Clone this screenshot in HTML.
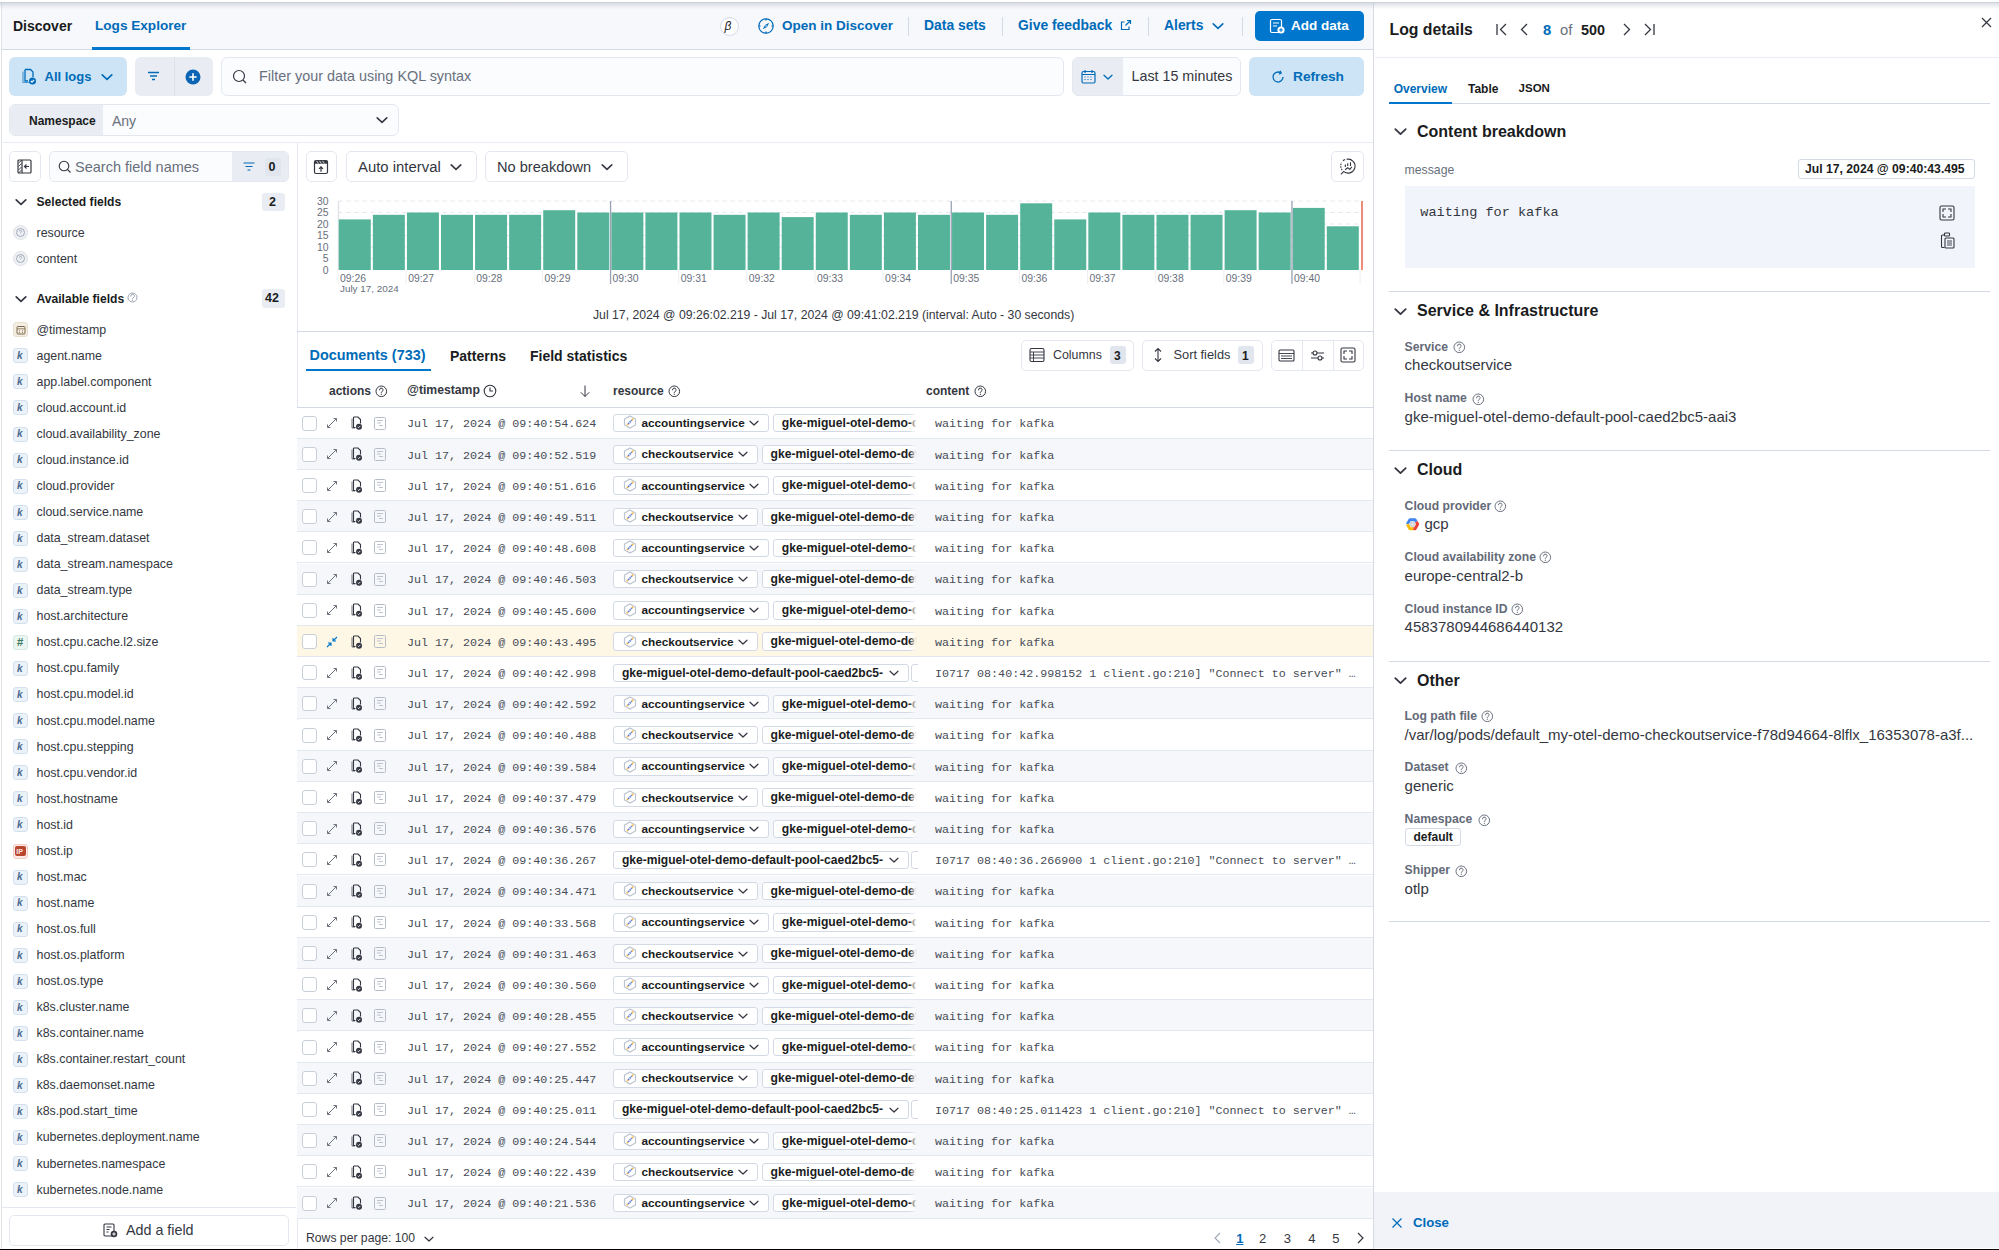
<!DOCTYPE html>
<html><head><meta charset="utf-8">
<style>
*{box-sizing:border-box;margin:0;padding:0}
html,body{width:1999px;height:1250px;overflow:hidden;background:#fff}
body{font-family:"Liberation Sans",sans-serif;color:#343741;position:relative;font-size:14px}
.a{position:absolute}
.t{white-space:nowrap}
svg{display:block;overflow:visible}
</style></head><body>
<div class="a" style="left:1px;top:3px;width:1px;height:1246px;background:#dfe2e7;border-radius:0px;"></div>
<div class="a" style="left:2px;top:3px;width:1371px;height:47px;background:#f7f8fc;border-radius:0px;border-bottom:1px solid #d3dae6"></div>
<div class="a t" style="left:13px;top:18.50px;font-size:14px;height:14px;line-height:14px;color:#1a1c21;font-weight:bold;font-family:'Liberation Sans',sans-serif;">Discover</div>
<div class="a t" style="left:95px;top:18.70px;font-size:13.6px;height:13.6px;line-height:13.6px;color:#006bb8;font-weight:bold;font-family:'Liberation Sans',sans-serif;">Logs Explorer</div>
<div class="a" style="left:92px;top:47px;width:98px;height:3px;background:#0077cc;border-radius:0px;"></div>
<div class="a" style="left:719.5px;top:16.5px;width:19px;height:19px;border-radius:50%;background:#fff;border:1px solid #d3dae6"></div>
<div class="a t" style="left:724.5px;top:20.00px;font-size:12px;height:12px;line-height:12px;color:#1a1c21;font-weight:normal;font-family:'Liberation Sans',sans-serif;font-style:italic">&beta;</div>
<svg class="a" style="left:758px;top:18px;" width="16" height="16" viewBox="0 0 16 16" fill="none"><circle cx="8" cy="8" r="7.2" stroke="#006bb8" stroke-width="1.2"/><path d="M8 0.8v1.8M8 13.4v1.8M0.8 8h1.8M13.4 8h1.8" stroke="#006bb8" stroke-width="1.2"/><path d="M11.2 4.8 L9 9 L4.8 11.2 L7 7 Z" fill="#006bb8"/><circle cx="8" cy="8" r="0.8" fill="#fff"/></svg>
<div class="a t" style="left:782px;top:19.25px;font-size:13.5px;height:13.5px;line-height:13.5px;color:#006bb8;font-weight:bold;font-family:'Liberation Sans',sans-serif;">Open in Discover</div>
<div class="a" style="left:908px;top:17px;width:1px;height:19px;background:#d3dae6;border-radius:0px;"></div>
<div class="a t" style="left:924px;top:19.05px;font-size:13.9px;height:13.9px;line-height:13.9px;color:#006bb8;font-weight:bold;font-family:'Liberation Sans',sans-serif;">Data sets</div>
<div class="a" style="left:1002px;top:17px;width:1px;height:19px;background:#d3dae6;border-radius:0px;"></div>
<div class="a t" style="left:1018px;top:19.05px;font-size:13.9px;height:13.9px;line-height:13.9px;color:#006bb8;font-weight:bold;font-family:'Liberation Sans',sans-serif;">Give feedback</div>
<svg class="a" style="left:1120px;top:19px;" width="12" height="12" viewBox="0 0 12 12" fill="none"><path d="M7 1.5 H10.5 V5 M10.5 1.5 L5.5 6.5 M9 7.5 V10.5 H1.5 V3 H4.5" stroke="#006bb8" stroke-width="1.2"/></svg>
<div class="a" style="left:1148px;top:17px;width:1px;height:19px;background:#d3dae6;border-radius:0px;"></div>
<div class="a t" style="left:1164px;top:19.05px;font-size:13.9px;height:13.9px;line-height:13.9px;color:#006bb8;font-weight:bold;font-family:'Liberation Sans',sans-serif;">Alerts</div>
<svg class="a" style="left:1212.0px;top:20.0px;" width="12" height="12" viewBox="0 0 10 10" fill="none"><path d="M1 3.2 L5 7 L9 3.2" stroke="#006bb8" stroke-width="1.3" stroke-linecap="round" stroke-linejoin="round"/></svg>
<div class="a" style="left:1242px;top:17px;width:1px;height:19px;background:#d3dae6;border-radius:0px;"></div>
<div class="a" style="left:1255px;top:11px;width:109px;height:30px;background:#0077cc;border-radius:5px;"></div>
<svg class="a" style="left:1269px;top:18px;" width="16" height="16" viewBox="0 0 16 16" fill="none"><rect x="1.5" y="1.5" width="11" height="13" rx="1.5" stroke="#fff" stroke-width="1.2"/><path d="M4 5h6M4 8h4" stroke="#fff" stroke-width="1.2"/><circle cx="12" cy="12" r="3.6" fill="#fff"/><path d="M12 10.2v3.6M10.2 12h3.6" stroke="#0077cc" stroke-width="1.2"/></svg>
<div class="a t" style="left:1291px;top:19.25px;font-size:13.5px;height:13.5px;line-height:13.5px;color:#fff;font-weight:bold;font-family:'Liberation Sans',sans-serif;">Add data</div>
<div class="a" style="left:9px;top:57px;width:118px;height:39px;background:#cce4f5;border-radius:6px;"></div>
<svg class="a" style="left:20px;top:68px;" width="17" height="17" viewBox="0 0 17 17" fill="none"><path d="M3 3.5 V14.5 H10" stroke="#006bb8" stroke-width="1.2" opacity="0.6"/><path d="M5 1.5 H10.5 L13 4 V9 M5 1.5 V13 H8" stroke="#006bb8" stroke-width="1.3"/><circle cx="12.5" cy="13" r="3.5" fill="#006bb8"/><path d="M10.8 13 L12 14.2 L14.2 11.8" stroke="#fff" stroke-width="1.1"/></svg>
<div class="a t" style="left:44.5px;top:70.00px;font-size:13px;height:13px;line-height:13px;color:#006bb8;font-weight:bold;font-family:'Liberation Sans',sans-serif;">All logs</div>
<svg class="a" style="left:101.0px;top:70.5px;" width="12" height="12" viewBox="0 0 10 10" fill="none"><path d="M1 3.2 L5 7 L9 3.2" stroke="#006bb8" stroke-width="1.4" stroke-linecap="round" stroke-linejoin="round"/></svg>
<div class="a" style="left:135px;top:57px;width:78px;height:39px;background:#e9edf3;border-radius:6px;"></div>
<div class="a" style="left:174px;top:57px;width:1px;height:39px;background:#dde2ea;border-radius:0px;"></div>
<svg class="a" style="left:147px;top:71px;" width="13" height="11" viewBox="0 0 13 11" fill="none"><path d="M1 1.5h11M3 5h7M5 8.5h3" stroke="#006bb8" stroke-width="1.3"/></svg>
<svg class="a" style="left:185px;top:69px;" width="16" height="16" viewBox="0 0 16 16" fill="none"><circle cx="8" cy="8" r="7.5" fill="#0b64b4"/><path d="M8 4.3v7.4M4.3 8h7.4" stroke="#fff" stroke-width="1.6"/></svg>
<div class="a" style="left:221px;top:57px;width:843px;height:39px;background:#fbfcfd;border:1px solid #e3e8f0;border-radius:6px;"></div>
<svg class="a" style="left:232px;top:69px;" width="16" height="16" viewBox="0 0 16 16" fill="none"><circle cx="7" cy="7" r="5.5" stroke="#343741" stroke-width="1.2"/><path d="M11 11 L14 14" stroke="#343741" stroke-width="1.2"/></svg>
<div class="a t" style="left:259px;top:69.30px;font-size:14.4px;height:14.4px;line-height:14.4px;color:#69707d;font-weight:normal;font-family:'Liberation Sans',sans-serif;">Filter your data using KQL syntax</div>
<div class="a" style="left:1072px;top:57px;width:169px;height:39px;background:#fbfcfd;border:1px solid #e3e8f0;border-radius:6px;"></div>
<div class="a" style="left:1073px;top:58px;width:50px;height:37px;background:#e9edf3;border-radius:0px;border-radius:5px 0 0 5px"></div>
<svg class="a" style="left:1081px;top:69px;" width="15" height="15" viewBox="0 0 15 15" fill="none"><rect x="1" y="2.5" width="13" height="11.5" rx="1.5" stroke="#006bb8" stroke-width="1.2"/><path d="M1 5.5h13M4 1v3M11 1v3" stroke="#006bb8" stroke-width="1.2"/><path d="M3.5 8h1M6.5 8h1M9.5 8h1M3.5 10.5h1M6.5 10.5h1M9.5 10.5h1" stroke="#006bb8" stroke-width="1"/></svg>
<svg class="a" style="left:1103.0px;top:72.0px;" width="10" height="10" viewBox="0 0 10 10" fill="none"><path d="M1 3.2 L5 7 L9 3.2" stroke="#006bb8" stroke-width="1.3" stroke-linecap="round" stroke-linejoin="round"/></svg>
<div class="a t" style="left:1131.5px;top:69.35px;font-size:14.3px;height:14.3px;line-height:14.3px;color:#343741;font-weight:normal;font-family:'Liberation Sans',sans-serif;">Last 15 minutes</div>
<div class="a" style="left:1249px;top:57px;width:115px;height:39px;background:#cce4f5;border-radius:6px;"></div>
<svg class="a" style="left:1271px;top:70px;" width="14" height="14" viewBox="0 0 14 14" fill="none"><path d="M12 7 A5 5 0 1 1 9.5 2.7" stroke="#006bb8" stroke-width="1.3"/><path d="M9 0.8 L10.2 3 L8 4.2" stroke="#006bb8" stroke-width="1.3"/></svg>
<div class="a t" style="left:1293px;top:69.65px;font-size:13.7px;height:13.7px;line-height:13.7px;color:#006bb8;font-weight:bold;font-family:'Liberation Sans',sans-serif;">Refresh</div>
<div class="a" style="left:9px;top:104px;width:390px;height:32px;background:#fbfcfd;border:1px solid #e3e8f0;border-radius:6px;"></div>
<div class="a" style="left:10px;top:105px;width:93px;height:30px;background:#e9edf3;border-radius:0px;border-radius:5px 0 0 5px"></div>
<div class="a t" style="left:29px;top:114.50px;font-size:12px;height:12px;line-height:12px;color:#1a1c21;font-weight:bold;font-family:'Liberation Sans',sans-serif;">Namespace</div>
<div class="a t" style="left:112px;top:113.50px;font-size:14px;height:14px;line-height:14px;color:#69707d;font-weight:normal;font-family:'Liberation Sans',sans-serif;">Any</div>
<svg class="a" style="left:376.0px;top:114.0px;" width="12" height="12" viewBox="0 0 10 10" fill="none"><path d="M1 3.2 L5 7 L9 3.2" stroke="#343741" stroke-width="1.3" stroke-linecap="round" stroke-linejoin="round"/></svg>
<div class="a" style="left:1px;top:142px;width:1372px;height:1px;background:#e9edf3;border-radius:0px;"></div>
<div class="a" style="left:296.5px;top:143px;width:1.3px;height:1106px;background:#e3e8f0;border-radius:0px;"></div>
<div class="a" style="left:9px;top:151px;width:32px;height:31px;background:#fff;border:1px solid #e3e8f0;border-radius:5px;"></div>
<svg class="a" style="left:17px;top:159px;" width="16" height="15" viewBox="0 0 16 15" fill="none"><rect x="1" y="1" width="13" height="13" rx="1" stroke="#343741" stroke-width="1.2"/><path d="M5 1v13" stroke="#343741" stroke-width="1.2"/><path d="M1.5 4l3-2.5M1.5 7.5l3-3M1.5 11l3-3M1.5 14l3-3" stroke="#343741" stroke-width="0.9"/><path d="M12 7.5H7.5M9.5 5.5l-2 2 2 2" stroke="#343741" stroke-width="1.2"/></svg>
<div class="a" style="left:49px;top:151px;width:240px;height:31px;background:#fbfcfd;border:1px solid #e3e8f0;border-radius:5px;"></div>
<div class="a" style="left:232px;top:152px;width:56px;height:29px;background:#e9edf3;border-radius:0px;border-radius:0 4px 4px 0"></div>
<svg class="a" style="left:58px;top:160px;" width="14" height="14" viewBox="0 0 14 14" fill="none"><circle cx="6" cy="6" r="4.8" stroke="#343741" stroke-width="1.1"/><path d="M9.5 9.5L12.5 12.5" stroke="#343741" stroke-width="1.1"/></svg>
<div class="a t" style="left:75px;top:159.75px;font-size:14.5px;height:14.5px;line-height:14.5px;color:#69707d;font-weight:normal;font-family:'Liberation Sans',sans-serif;">Search field names</div>
<svg class="a" style="left:243px;top:162px;" width="12" height="10" viewBox="0 0 12 10" fill="none"><path d="M0.5 1h11M2.5 4.5h7M4.5 8h3" stroke="#006bb8" stroke-width="1.2"/></svg>
<div class="a" style="left:264.5px;top:158px;width:16px;height:18px;background:#e0e5ee;border-radius:3px;"></div>
<div class="a t" style="left:268.5px;top:160.75px;font-size:12.5px;height:12.5px;line-height:12.5px;color:#1a1c21;font-weight:bold;font-family:'Liberation Sans',sans-serif;">0</div>
<svg class="a" style="left:14.5px;top:195.5px;" width="12" height="12" viewBox="0 0 10 10" fill="none"><path d="M1 3.2 L5 7 L9 3.2" stroke="#343741" stroke-width="1.4" stroke-linecap="round" stroke-linejoin="round"/></svg>
<div class="a t" style="left:36.5px;top:196.25px;font-size:12.1px;height:12.1px;line-height:12.1px;color:#1a1c21;font-weight:bold;font-family:'Liberation Sans',sans-serif;">Selected fields</div>
<div class="a" style="left:262px;top:193px;width:23px;height:18px;background:#e9edf3;border-radius:3px;"></div>
<div class="a t" style="left:269px;top:195.75px;font-size:12.5px;height:12.5px;line-height:12.5px;color:#1a1c21;font-weight:bold;font-family:'Liberation Sans',sans-serif;">2</div>
<svg class="a" style="left:13.3px;top:225.3px;" width="15" height="15" viewBox="0 0 15 15" fill="none"><circle cx="7.5" cy="7.5" r="7" fill="#eef0f3" stroke="#dfe2e7" stroke-width="1"/><circle cx="7.5" cy="7.5" r="4" stroke="#98a2b3" stroke-width="0.9"/><path d="M6.3 6.5a1.2 1.2 0 1 1 1.8 1c-.4.2-.6.4-.6.9" stroke="#98a2b3" stroke-width="0.8"/></svg>
<div class="a t" style="left:36.5px;top:227.30px;font-size:12.4px;height:12.4px;line-height:12.4px;color:#343741;font-weight:normal;font-family:'Liberation Sans',sans-serif;">resource</div>
<svg class="a" style="left:13.3px;top:251.2px;" width="15" height="15" viewBox="0 0 15 15" fill="none"><circle cx="7.5" cy="7.5" r="7" fill="#eef0f3" stroke="#dfe2e7" stroke-width="1"/><circle cx="7.5" cy="7.5" r="4" stroke="#98a2b3" stroke-width="0.9"/><path d="M6.3 6.5a1.2 1.2 0 1 1 1.8 1c-.4.2-.6.4-.6.9" stroke="#98a2b3" stroke-width="0.8"/></svg>
<div class="a t" style="left:36.5px;top:253.30px;font-size:12.4px;height:12.4px;line-height:12.4px;color:#343741;font-weight:normal;font-family:'Liberation Sans',sans-serif;">content</div>
<svg class="a" style="left:14.5px;top:292.5px;" width="12" height="12" viewBox="0 0 10 10" fill="none"><path d="M1 3.2 L5 7 L9 3.2" stroke="#343741" stroke-width="1.4" stroke-linecap="round" stroke-linejoin="round"/></svg>
<div class="a t" style="left:36.5px;top:293.25px;font-size:12.1px;height:12.1px;line-height:12.1px;color:#1a1c21;font-weight:bold;font-family:'Liberation Sans',sans-serif;">Available fields</div>
<svg class="a" style="left:127.0px;top:292.0px;" width="11.0" height="11.0" viewBox="0 0 11.0 11.0" fill="none"><circle cx="5.5" cy="5.5" r="4.5" stroke="#98a2b3" stroke-width="1"/><path d="M3.7 4.1 a1.8 1.8 0 1 1 2.6 1.6 c-0.6 0.3 -0.8 0.6 -0.8 1.3" stroke="#98a2b3" stroke-width="1" stroke-linecap="round"/><circle cx="5.5" cy="8.5" r="0.6" fill="#98a2b3"/></svg>
<div class="a" style="left:262px;top:289px;width:23px;height:19px;background:#e9edf3;border-radius:3px;"></div>
<div class="a t" style="left:265px;top:292.25px;font-size:12.5px;height:12.5px;line-height:12.5px;color:#1a1c21;font-weight:bold;font-family:'Liberation Sans',sans-serif;">42</div>
<div class="a" style="left:13px;top:322.3px;width:15px;height:15px;background:#f4ede1;border:1px solid #e8dfcd;border-radius:3px;"></div>
<svg class="a" style="left:15.5px;top:324.8px;" width="10" height="10" viewBox="0 0 10 10" fill="none"><rect x="1" y="1.5" width="8" height="7.5" rx="1" stroke="#7d6a4d" stroke-width="1"/><path d="M1 3.8h8M3 5.8h1M6 5.8h1M3 7.5h1M6 7.5h1" stroke="#7d6a4d" stroke-width="0.8"/></svg>
<div class="a t" style="left:36.5px;top:323.60px;font-size:12.4px;height:12.4px;line-height:12.4px;color:#343741;font-weight:normal;font-family:'Liberation Sans',sans-serif;">@timestamp</div>
<div class="a" style="left:13px;top:348.36px;width:15px;height:15px;background:#ebf2fa;border:1px solid #d3e1ef;border-radius:3px;"></div>
<div class="a t" style="left:17px;top:351.16px;font-size:10px;height:10px;line-height:10px;color:#4a6a8e;font-weight:bold;font-family:'Liberation Sans',sans-serif;font-style:italic">k</div>
<div class="a t" style="left:36.5px;top:349.66px;font-size:12.4px;height:12.4px;line-height:12.4px;color:#343741;font-weight:normal;font-family:'Liberation Sans',sans-serif;">agent.name</div>
<div class="a" style="left:13px;top:374.42px;width:15px;height:15px;background:#ebf2fa;border:1px solid #d3e1ef;border-radius:3px;"></div>
<div class="a t" style="left:17px;top:377.22px;font-size:10px;height:10px;line-height:10px;color:#4a6a8e;font-weight:bold;font-family:'Liberation Sans',sans-serif;font-style:italic">k</div>
<div class="a t" style="left:36.5px;top:375.72px;font-size:12.4px;height:12.4px;line-height:12.4px;color:#343741;font-weight:normal;font-family:'Liberation Sans',sans-serif;">app.label.component</div>
<div class="a" style="left:13px;top:400.48px;width:15px;height:15px;background:#ebf2fa;border:1px solid #d3e1ef;border-radius:3px;"></div>
<div class="a t" style="left:17px;top:403.28px;font-size:10px;height:10px;line-height:10px;color:#4a6a8e;font-weight:bold;font-family:'Liberation Sans',sans-serif;font-style:italic">k</div>
<div class="a t" style="left:36.5px;top:401.78px;font-size:12.4px;height:12.4px;line-height:12.4px;color:#343741;font-weight:normal;font-family:'Liberation Sans',sans-serif;">cloud.account.id</div>
<div class="a" style="left:13px;top:426.54px;width:15px;height:15px;background:#ebf2fa;border:1px solid #d3e1ef;border-radius:3px;"></div>
<div class="a t" style="left:17px;top:429.34px;font-size:10px;height:10px;line-height:10px;color:#4a6a8e;font-weight:bold;font-family:'Liberation Sans',sans-serif;font-style:italic">k</div>
<div class="a t" style="left:36.5px;top:427.84px;font-size:12.4px;height:12.4px;line-height:12.4px;color:#343741;font-weight:normal;font-family:'Liberation Sans',sans-serif;">cloud.availability_zone</div>
<div class="a" style="left:13px;top:452.6px;width:15px;height:15px;background:#ebf2fa;border:1px solid #d3e1ef;border-radius:3px;"></div>
<div class="a t" style="left:17px;top:455.40px;font-size:10px;height:10px;line-height:10px;color:#4a6a8e;font-weight:bold;font-family:'Liberation Sans',sans-serif;font-style:italic">k</div>
<div class="a t" style="left:36.5px;top:453.90px;font-size:12.4px;height:12.4px;line-height:12.4px;color:#343741;font-weight:normal;font-family:'Liberation Sans',sans-serif;">cloud.instance.id</div>
<div class="a" style="left:13px;top:478.65999999999997px;width:15px;height:15px;background:#ebf2fa;border:1px solid #d3e1ef;border-radius:3px;"></div>
<div class="a t" style="left:17px;top:481.46px;font-size:10px;height:10px;line-height:10px;color:#4a6a8e;font-weight:bold;font-family:'Liberation Sans',sans-serif;font-style:italic">k</div>
<div class="a t" style="left:36.5px;top:479.96px;font-size:12.4px;height:12.4px;line-height:12.4px;color:#343741;font-weight:normal;font-family:'Liberation Sans',sans-serif;">cloud.provider</div>
<div class="a" style="left:13px;top:504.72px;width:15px;height:15px;background:#ebf2fa;border:1px solid #d3e1ef;border-radius:3px;"></div>
<div class="a t" style="left:17px;top:507.52px;font-size:10px;height:10px;line-height:10px;color:#4a6a8e;font-weight:bold;font-family:'Liberation Sans',sans-serif;font-style:italic">k</div>
<div class="a t" style="left:36.5px;top:506.02px;font-size:12.4px;height:12.4px;line-height:12.4px;color:#343741;font-weight:normal;font-family:'Liberation Sans',sans-serif;">cloud.service.name</div>
<div class="a" style="left:13px;top:530.78px;width:15px;height:15px;background:#ebf2fa;border:1px solid #d3e1ef;border-radius:3px;"></div>
<div class="a t" style="left:17px;top:533.58px;font-size:10px;height:10px;line-height:10px;color:#4a6a8e;font-weight:bold;font-family:'Liberation Sans',sans-serif;font-style:italic">k</div>
<div class="a t" style="left:36.5px;top:532.08px;font-size:12.4px;height:12.4px;line-height:12.4px;color:#343741;font-weight:normal;font-family:'Liberation Sans',sans-serif;">data_stream.dataset</div>
<div class="a" style="left:13px;top:556.84px;width:15px;height:15px;background:#ebf2fa;border:1px solid #d3e1ef;border-radius:3px;"></div>
<div class="a t" style="left:17px;top:559.64px;font-size:10px;height:10px;line-height:10px;color:#4a6a8e;font-weight:bold;font-family:'Liberation Sans',sans-serif;font-style:italic">k</div>
<div class="a t" style="left:36.5px;top:558.14px;font-size:12.4px;height:12.4px;line-height:12.4px;color:#343741;font-weight:normal;font-family:'Liberation Sans',sans-serif;">data_stream.namespace</div>
<div class="a" style="left:13px;top:582.9px;width:15px;height:15px;background:#ebf2fa;border:1px solid #d3e1ef;border-radius:3px;"></div>
<div class="a t" style="left:17px;top:585.70px;font-size:10px;height:10px;line-height:10px;color:#4a6a8e;font-weight:bold;font-family:'Liberation Sans',sans-serif;font-style:italic">k</div>
<div class="a t" style="left:36.5px;top:584.20px;font-size:12.4px;height:12.4px;line-height:12.4px;color:#343741;font-weight:normal;font-family:'Liberation Sans',sans-serif;">data_stream.type</div>
<div class="a" style="left:13px;top:608.96px;width:15px;height:15px;background:#ebf2fa;border:1px solid #d3e1ef;border-radius:3px;"></div>
<div class="a t" style="left:17px;top:611.76px;font-size:10px;height:10px;line-height:10px;color:#4a6a8e;font-weight:bold;font-family:'Liberation Sans',sans-serif;font-style:italic">k</div>
<div class="a t" style="left:36.5px;top:610.26px;font-size:12.4px;height:12.4px;line-height:12.4px;color:#343741;font-weight:normal;font-family:'Liberation Sans',sans-serif;">host.architecture</div>
<div class="a" style="left:13px;top:635.02px;width:15px;height:15px;background:#ebf6f3;border:1px solid #d3e9e2;border-radius:3px;"></div>
<div class="a t" style="left:16.8px;top:637.37px;font-size:11.5px;height:11.5px;line-height:11.5px;color:#3d7a62;font-weight:bold;font-family:'Liberation Sans',sans-serif;font-style:italic">#</div>
<div class="a t" style="left:36.5px;top:636.32px;font-size:12.4px;height:12.4px;line-height:12.4px;color:#343741;font-weight:normal;font-family:'Liberation Sans',sans-serif;">host.cpu.cache.l2.size</div>
<div class="a" style="left:13px;top:661.0799999999999px;width:15px;height:15px;background:#ebf2fa;border:1px solid #d3e1ef;border-radius:3px;"></div>
<div class="a t" style="left:17px;top:663.88px;font-size:10px;height:10px;line-height:10px;color:#4a6a8e;font-weight:bold;font-family:'Liberation Sans',sans-serif;font-style:italic">k</div>
<div class="a t" style="left:36.5px;top:662.38px;font-size:12.4px;height:12.4px;line-height:12.4px;color:#343741;font-weight:normal;font-family:'Liberation Sans',sans-serif;">host.cpu.family</div>
<div class="a" style="left:13px;top:687.14px;width:15px;height:15px;background:#ebf2fa;border:1px solid #d3e1ef;border-radius:3px;"></div>
<div class="a t" style="left:17px;top:689.94px;font-size:10px;height:10px;line-height:10px;color:#4a6a8e;font-weight:bold;font-family:'Liberation Sans',sans-serif;font-style:italic">k</div>
<div class="a t" style="left:36.5px;top:688.44px;font-size:12.4px;height:12.4px;line-height:12.4px;color:#343741;font-weight:normal;font-family:'Liberation Sans',sans-serif;">host.cpu.model.id</div>
<div class="a" style="left:13px;top:713.2px;width:15px;height:15px;background:#ebf2fa;border:1px solid #d3e1ef;border-radius:3px;"></div>
<div class="a t" style="left:17px;top:716.00px;font-size:10px;height:10px;line-height:10px;color:#4a6a8e;font-weight:bold;font-family:'Liberation Sans',sans-serif;font-style:italic">k</div>
<div class="a t" style="left:36.5px;top:714.50px;font-size:12.4px;height:12.4px;line-height:12.4px;color:#343741;font-weight:normal;font-family:'Liberation Sans',sans-serif;">host.cpu.model.name</div>
<div class="a" style="left:13px;top:739.26px;width:15px;height:15px;background:#ebf2fa;border:1px solid #d3e1ef;border-radius:3px;"></div>
<div class="a t" style="left:17px;top:742.06px;font-size:10px;height:10px;line-height:10px;color:#4a6a8e;font-weight:bold;font-family:'Liberation Sans',sans-serif;font-style:italic">k</div>
<div class="a t" style="left:36.5px;top:740.56px;font-size:12.4px;height:12.4px;line-height:12.4px;color:#343741;font-weight:normal;font-family:'Liberation Sans',sans-serif;">host.cpu.stepping</div>
<div class="a" style="left:13px;top:765.3199999999999px;width:15px;height:15px;background:#ebf2fa;border:1px solid #d3e1ef;border-radius:3px;"></div>
<div class="a t" style="left:17px;top:768.12px;font-size:10px;height:10px;line-height:10px;color:#4a6a8e;font-weight:bold;font-family:'Liberation Sans',sans-serif;font-style:italic">k</div>
<div class="a t" style="left:36.5px;top:766.62px;font-size:12.4px;height:12.4px;line-height:12.4px;color:#343741;font-weight:normal;font-family:'Liberation Sans',sans-serif;">host.cpu.vendor.id</div>
<div class="a" style="left:13px;top:791.38px;width:15px;height:15px;background:#ebf2fa;border:1px solid #d3e1ef;border-radius:3px;"></div>
<div class="a t" style="left:17px;top:794.18px;font-size:10px;height:10px;line-height:10px;color:#4a6a8e;font-weight:bold;font-family:'Liberation Sans',sans-serif;font-style:italic">k</div>
<div class="a t" style="left:36.5px;top:792.68px;font-size:12.4px;height:12.4px;line-height:12.4px;color:#343741;font-weight:normal;font-family:'Liberation Sans',sans-serif;">host.hostname</div>
<div class="a" style="left:13px;top:817.44px;width:15px;height:15px;background:#ebf2fa;border:1px solid #d3e1ef;border-radius:3px;"></div>
<div class="a t" style="left:17px;top:820.24px;font-size:10px;height:10px;line-height:10px;color:#4a6a8e;font-weight:bold;font-family:'Liberation Sans',sans-serif;font-style:italic">k</div>
<div class="a t" style="left:36.5px;top:818.74px;font-size:12.4px;height:12.4px;line-height:12.4px;color:#343741;font-weight:normal;font-family:'Liberation Sans',sans-serif;">host.id</div>
<div class="a" style="left:13px;top:843.5px;width:15px;height:15px;background:#fbe9e5;border:1px solid #f2cdc4;border-radius:3px;"></div>
<div class="a" style="left:15.2px;top:845.7px;width:10.6px;height:10.6px;background:#b9472f;border-radius:2px;"></div>
<div class="a t" style="left:16.3px;top:847.80px;font-size:7px;height:7px;line-height:7px;color:#fde9e4;font-weight:bold;font-family:'Liberation Sans',sans-serif;">IP</div>
<div class="a t" style="left:36.5px;top:844.80px;font-size:12.4px;height:12.4px;line-height:12.4px;color:#343741;font-weight:normal;font-family:'Liberation Sans',sans-serif;">host.ip</div>
<div class="a" style="left:13px;top:869.56px;width:15px;height:15px;background:#ebf2fa;border:1px solid #d3e1ef;border-radius:3px;"></div>
<div class="a t" style="left:17px;top:872.36px;font-size:10px;height:10px;line-height:10px;color:#4a6a8e;font-weight:bold;font-family:'Liberation Sans',sans-serif;font-style:italic">k</div>
<div class="a t" style="left:36.5px;top:870.86px;font-size:12.4px;height:12.4px;line-height:12.4px;color:#343741;font-weight:normal;font-family:'Liberation Sans',sans-serif;">host.mac</div>
<div class="a" style="left:13px;top:895.6199999999999px;width:15px;height:15px;background:#ebf2fa;border:1px solid #d3e1ef;border-radius:3px;"></div>
<div class="a t" style="left:17px;top:898.42px;font-size:10px;height:10px;line-height:10px;color:#4a6a8e;font-weight:bold;font-family:'Liberation Sans',sans-serif;font-style:italic">k</div>
<div class="a t" style="left:36.5px;top:896.92px;font-size:12.4px;height:12.4px;line-height:12.4px;color:#343741;font-weight:normal;font-family:'Liberation Sans',sans-serif;">host.name</div>
<div class="a" style="left:13px;top:921.6800000000001px;width:15px;height:15px;background:#ebf2fa;border:1px solid #d3e1ef;border-radius:3px;"></div>
<div class="a t" style="left:17px;top:924.48px;font-size:10px;height:10px;line-height:10px;color:#4a6a8e;font-weight:bold;font-family:'Liberation Sans',sans-serif;font-style:italic">k</div>
<div class="a t" style="left:36.5px;top:922.98px;font-size:12.4px;height:12.4px;line-height:12.4px;color:#343741;font-weight:normal;font-family:'Liberation Sans',sans-serif;">host.os.full</div>
<div class="a" style="left:13px;top:947.74px;width:15px;height:15px;background:#ebf2fa;border:1px solid #d3e1ef;border-radius:3px;"></div>
<div class="a t" style="left:17px;top:950.54px;font-size:10px;height:10px;line-height:10px;color:#4a6a8e;font-weight:bold;font-family:'Liberation Sans',sans-serif;font-style:italic">k</div>
<div class="a t" style="left:36.5px;top:949.04px;font-size:12.4px;height:12.4px;line-height:12.4px;color:#343741;font-weight:normal;font-family:'Liberation Sans',sans-serif;">host.os.platform</div>
<div class="a" style="left:13px;top:973.8px;width:15px;height:15px;background:#ebf2fa;border:1px solid #d3e1ef;border-radius:3px;"></div>
<div class="a t" style="left:17px;top:976.60px;font-size:10px;height:10px;line-height:10px;color:#4a6a8e;font-weight:bold;font-family:'Liberation Sans',sans-serif;font-style:italic">k</div>
<div class="a t" style="left:36.5px;top:975.10px;font-size:12.4px;height:12.4px;line-height:12.4px;color:#343741;font-weight:normal;font-family:'Liberation Sans',sans-serif;">host.os.type</div>
<div class="a" style="left:13px;top:999.8599999999999px;width:15px;height:15px;background:#ebf2fa;border:1px solid #d3e1ef;border-radius:3px;"></div>
<div class="a t" style="left:17px;top:1002.66px;font-size:10px;height:10px;line-height:10px;color:#4a6a8e;font-weight:bold;font-family:'Liberation Sans',sans-serif;font-style:italic">k</div>
<div class="a t" style="left:36.5px;top:1001.16px;font-size:12.4px;height:12.4px;line-height:12.4px;color:#343741;font-weight:normal;font-family:'Liberation Sans',sans-serif;">k8s.cluster.name</div>
<div class="a" style="left:13px;top:1025.92px;width:15px;height:15px;background:#ebf2fa;border:1px solid #d3e1ef;border-radius:3px;"></div>
<div class="a t" style="left:17px;top:1028.72px;font-size:10px;height:10px;line-height:10px;color:#4a6a8e;font-weight:bold;font-family:'Liberation Sans',sans-serif;font-style:italic">k</div>
<div class="a t" style="left:36.5px;top:1027.22px;font-size:12.4px;height:12.4px;line-height:12.4px;color:#343741;font-weight:normal;font-family:'Liberation Sans',sans-serif;">k8s.container.name</div>
<div class="a" style="left:13px;top:1051.98px;width:15px;height:15px;background:#ebf2fa;border:1px solid #d3e1ef;border-radius:3px;"></div>
<div class="a t" style="left:17px;top:1054.78px;font-size:10px;height:10px;line-height:10px;color:#4a6a8e;font-weight:bold;font-family:'Liberation Sans',sans-serif;font-style:italic">k</div>
<div class="a t" style="left:36.5px;top:1053.28px;font-size:12.4px;height:12.4px;line-height:12.4px;color:#343741;font-weight:normal;font-family:'Liberation Sans',sans-serif;">k8s.container.restart_count</div>
<div class="a" style="left:13px;top:1078.04px;width:15px;height:15px;background:#ebf2fa;border:1px solid #d3e1ef;border-radius:3px;"></div>
<div class="a t" style="left:17px;top:1080.84px;font-size:10px;height:10px;line-height:10px;color:#4a6a8e;font-weight:bold;font-family:'Liberation Sans',sans-serif;font-style:italic">k</div>
<div class="a t" style="left:36.5px;top:1079.34px;font-size:12.4px;height:12.4px;line-height:12.4px;color:#343741;font-weight:normal;font-family:'Liberation Sans',sans-serif;">k8s.daemonset.name</div>
<div class="a" style="left:13px;top:1104.1px;width:15px;height:15px;background:#ebf2fa;border:1px solid #d3e1ef;border-radius:3px;"></div>
<div class="a t" style="left:17px;top:1106.90px;font-size:10px;height:10px;line-height:10px;color:#4a6a8e;font-weight:bold;font-family:'Liberation Sans',sans-serif;font-style:italic">k</div>
<div class="a t" style="left:36.5px;top:1105.40px;font-size:12.4px;height:12.4px;line-height:12.4px;color:#343741;font-weight:normal;font-family:'Liberation Sans',sans-serif;">k8s.pod.start_time</div>
<div class="a" style="left:13px;top:1130.16px;width:15px;height:15px;background:#ebf2fa;border:1px solid #d3e1ef;border-radius:3px;"></div>
<div class="a t" style="left:17px;top:1132.96px;font-size:10px;height:10px;line-height:10px;color:#4a6a8e;font-weight:bold;font-family:'Liberation Sans',sans-serif;font-style:italic">k</div>
<div class="a t" style="left:36.5px;top:1131.46px;font-size:12.4px;height:12.4px;line-height:12.4px;color:#343741;font-weight:normal;font-family:'Liberation Sans',sans-serif;">kubernetes.deployment.name</div>
<div class="a" style="left:13px;top:1156.22px;width:15px;height:15px;background:#ebf2fa;border:1px solid #d3e1ef;border-radius:3px;"></div>
<div class="a t" style="left:17px;top:1159.02px;font-size:10px;height:10px;line-height:10px;color:#4a6a8e;font-weight:bold;font-family:'Liberation Sans',sans-serif;font-style:italic">k</div>
<div class="a t" style="left:36.5px;top:1157.52px;font-size:12.4px;height:12.4px;line-height:12.4px;color:#343741;font-weight:normal;font-family:'Liberation Sans',sans-serif;">kubernetes.namespace</div>
<div class="a" style="left:13px;top:1182.28px;width:15px;height:15px;background:#ebf2fa;border:1px solid #d3e1ef;border-radius:3px;"></div>
<div class="a t" style="left:17px;top:1185.08px;font-size:10px;height:10px;line-height:10px;color:#4a6a8e;font-weight:bold;font-family:'Liberation Sans',sans-serif;font-style:italic">k</div>
<div class="a t" style="left:36.5px;top:1183.58px;font-size:12.4px;height:12.4px;line-height:12.4px;color:#343741;font-weight:normal;font-family:'Liberation Sans',sans-serif;">kubernetes.node.name</div>
<div class="a" style="left:1px;top:1207px;width:295px;height:1px;background:#e3e8f0;border-radius:0px;"></div>
<div class="a" style="left:9px;top:1215px;width:280px;height:31px;background:#fff;border:1px solid #e3e8f0;border-radius:5px;"></div>
<svg class="a" style="left:103px;top:1223px;" width="15" height="15" viewBox="0 0 15 15" fill="none"><rect x="1" y="1" width="10" height="12" rx="1" stroke="#343741" stroke-width="1.1"/><path d="M3.5 4h5M3.5 6.5h3M3.5 9h2" stroke="#343741" stroke-width="1"/><circle cx="11" cy="11" r="3.3" fill="#343741"/><path d="M11 9.3v3.4M9.3 11h3.4" stroke="#fff" stroke-width="1"/></svg>
<div class="a t" style="left:126px;top:1223.35px;font-size:14.3px;height:14.3px;line-height:14.3px;color:#343741;font-weight:normal;font-family:'Liberation Sans',sans-serif;">Add a field</div>
<div class="a" style="left:306px;top:151px;width:31px;height:31px;background:#fff;border:1px solid #e3e8f0;border-radius:5px;"></div>
<svg class="a" style="left:313.3px;top:158.5px;" width="16" height="16" viewBox="0 0 16 16" fill="none"><rect x="1.5" y="1.5" width="13" height="13" rx="1.5" stroke="#343741" stroke-width="1.2"/><rect x="1.5" y="1.5" width="13" height="3.2" rx="1" fill="#343741"/><path d="M3.5 1.8l1.8 2.6M6.5 1.8l1.8 2.6M9.5 1.8l1.8 2.6" stroke="#fff" stroke-width="0.8"/><path d="M8 12.8V7.8M6 9.8l2-2 2 2" stroke="#343741" stroke-width="1.2"/></svg>
<div class="a" style="left:346px;top:151px;width:131px;height:31px;background:#fff;border:1px solid #e3e8f0;border-radius:5px;"></div>
<div class="a t" style="left:358px;top:159.95px;font-size:14.9px;height:14.9px;line-height:14.9px;color:#343741;font-weight:normal;font-family:'Liberation Sans',sans-serif;">Auto interval</div>
<svg class="a" style="left:450.0px;top:160.5px;" width="12" height="12" viewBox="0 0 10 10" fill="none"><path d="M1 3.2 L5 7 L9 3.2" stroke="#343741" stroke-width="1.3" stroke-linecap="round" stroke-linejoin="round"/></svg>
<div class="a" style="left:485px;top:151px;width:143px;height:31px;background:#fff;border:1px solid #e3e8f0;border-radius:5px;"></div>
<div class="a t" style="left:497px;top:160.10px;font-size:14.6px;height:14.6px;line-height:14.6px;color:#343741;font-weight:normal;font-family:'Liberation Sans',sans-serif;">No breakdown</div>
<svg class="a" style="left:600.5px;top:160.5px;" width="12" height="12" viewBox="0 0 10 10" fill="none"><path d="M1 3.2 L5 7 L9 3.2" stroke="#343741" stroke-width="1.3" stroke-linecap="round" stroke-linejoin="round"/></svg>
<div class="a" style="left:1331px;top:151px;width:33px;height:31px;background:#fff;border:1px solid #e3e8f0;border-radius:5px;"></div>
<svg class="a" style="left:1338px;top:158px;" width="18" height="18" viewBox="0 0 18 18" fill="none"><path d="M8.5 1.3 A7 7 0 1 1 5.2 13.2" stroke="#343741" stroke-width="1.1"/><path d="M4.2 12.2 A7 7 0 0 1 3.6 4.6" stroke="#343741" stroke-width="1.1" stroke-dasharray="1.6 1"/><path d="M5 2.8 A7 7 0 0 1 7 1.5" stroke="#343741" stroke-width="1.1"/><path d="M5.6 13.7L2.9 16.4" stroke="#343741" stroke-width="1.1"/><path d="M7.3 6.4V8.9M9.7 5.3V7.9M12.5 4.3V7.9" stroke="#343741" stroke-width="1.1"/><path d="M7.1 11.8L9.7 9.7 11.8 11.5 13.8 8.8" stroke="#343741" stroke-width="1.1"/></svg>
<svg class="a" style="left:0;top:0" width="1999" height="1250" viewBox="0 0 1999 1250"><line x1="338.5" y1="258.50" x2="1362" y2="258.50" stroke="#e3e6ec" stroke-width="1" stroke-dasharray="4 4"/><line x1="338.5" y1="247.00" x2="1362" y2="247.00" stroke="#e3e6ec" stroke-width="1" stroke-dasharray="4 4"/><line x1="338.5" y1="235.50" x2="1362" y2="235.50" stroke="#e3e6ec" stroke-width="1" stroke-dasharray="4 4"/><line x1="338.5" y1="224.00" x2="1362" y2="224.00" stroke="#e3e6ec" stroke-width="1" stroke-dasharray="4 4"/><line x1="338.5" y1="212.50" x2="1362" y2="212.50" stroke="#e3e6ec" stroke-width="1" stroke-dasharray="4 4"/><line x1="338.5" y1="201.00" x2="1362" y2="201.00" stroke="#e3e6ec" stroke-width="1" stroke-dasharray="4 4"/><line x1="338.5" y1="201" x2="338.5" y2="270" stroke="#e0e3e8" stroke-width="1.5"/><rect x="338.80" y="219.40" width="31.97" height="50.60" fill="#54b399"/><rect x="372.87" y="214.80" width="31.97" height="55.20" fill="#54b399"/><rect x="406.94" y="212.50" width="31.97" height="57.50" fill="#54b399"/><rect x="441.01" y="214.80" width="31.97" height="55.20" fill="#54b399"/><rect x="475.08" y="214.80" width="31.97" height="55.20" fill="#54b399"/><rect x="509.15" y="214.80" width="31.97" height="55.20" fill="#54b399"/><rect x="543.22" y="210.20" width="31.97" height="59.80" fill="#54b399"/><rect x="577.29" y="212.50" width="31.97" height="57.50" fill="#54b399"/><rect x="611.36" y="212.50" width="31.97" height="57.50" fill="#54b399"/><rect x="645.43" y="212.50" width="31.97" height="57.50" fill="#54b399"/><rect x="679.50" y="212.50" width="31.97" height="57.50" fill="#54b399"/><rect x="713.57" y="214.80" width="31.97" height="55.20" fill="#54b399"/><rect x="747.64" y="212.50" width="31.97" height="57.50" fill="#54b399"/><rect x="781.71" y="217.10" width="31.97" height="52.90" fill="#54b399"/><rect x="815.78" y="212.50" width="31.97" height="57.50" fill="#54b399"/><rect x="849.85" y="214.80" width="31.97" height="55.20" fill="#54b399"/><rect x="883.92" y="212.50" width="31.97" height="57.50" fill="#54b399"/><rect x="917.99" y="214.80" width="31.97" height="55.20" fill="#54b399"/><rect x="952.06" y="212.50" width="31.97" height="57.50" fill="#54b399"/><rect x="986.13" y="214.80" width="31.97" height="55.20" fill="#54b399"/><rect x="1020.20" y="203.30" width="31.97" height="66.70" fill="#54b399"/><rect x="1054.27" y="219.40" width="31.97" height="50.60" fill="#54b399"/><rect x="1088.34" y="212.50" width="31.97" height="57.50" fill="#54b399"/><rect x="1122.41" y="214.80" width="31.97" height="55.20" fill="#54b399"/><rect x="1156.48" y="214.80" width="31.97" height="55.20" fill="#54b399"/><rect x="1190.55" y="214.80" width="31.97" height="55.20" fill="#54b399"/><rect x="1224.62" y="210.20" width="31.97" height="59.80" fill="#54b399"/><rect x="1258.69" y="212.50" width="31.97" height="57.50" fill="#54b399"/><rect x="1292.76" y="207.90" width="31.97" height="62.10" fill="#54b399"/><rect x="1326.83" y="226.30" width="31.97" height="43.70" fill="#54b399"/><line x1="338.00" y1="270" x2="338.00" y2="284" stroke="#eceff3" stroke-width="1"/><line x1="406.14" y1="270" x2="406.14" y2="284" stroke="#eceff3" stroke-width="1"/><line x1="474.28" y1="270" x2="474.28" y2="284" stroke="#eceff3" stroke-width="1"/><line x1="542.42" y1="270" x2="542.42" y2="284" stroke="#eceff3" stroke-width="1"/><line x1="610.56" y1="201" x2="610.56" y2="284" stroke="#98a2b3" stroke-width="1.3"/><line x1="678.70" y1="270" x2="678.70" y2="284" stroke="#eceff3" stroke-width="1"/><line x1="746.84" y1="270" x2="746.84" y2="284" stroke="#eceff3" stroke-width="1"/><line x1="814.98" y1="270" x2="814.98" y2="284" stroke="#eceff3" stroke-width="1"/><line x1="883.12" y1="270" x2="883.12" y2="284" stroke="#eceff3" stroke-width="1"/><line x1="951.26" y1="201" x2="951.26" y2="284" stroke="#98a2b3" stroke-width="1.3"/><line x1="1019.40" y1="270" x2="1019.40" y2="284" stroke="#eceff3" stroke-width="1"/><line x1="1087.54" y1="270" x2="1087.54" y2="284" stroke="#eceff3" stroke-width="1"/><line x1="1155.68" y1="270" x2="1155.68" y2="284" stroke="#eceff3" stroke-width="1"/><line x1="1223.82" y1="270" x2="1223.82" y2="284" stroke="#eceff3" stroke-width="1"/><line x1="1291.96" y1="201" x2="1291.96" y2="284" stroke="#98a2b3" stroke-width="1.3"/><line x1="1360.10" y1="270" x2="1360.10" y2="284" stroke="#eceff3" stroke-width="1"/><line x1="1362" y1="201" x2="1362" y2="270" stroke="#e7664c" stroke-width="1.5"/></svg>
<div class="a t" style="left:340.0px;top:274.10px;font-size:10.4px;height:10.4px;line-height:10.4px;color:#69707d;font-weight:normal;font-family:'Liberation Sans',sans-serif;">09:26</div>
<div class="a t" style="left:408.14px;top:274.10px;font-size:10.4px;height:10.4px;line-height:10.4px;color:#69707d;font-weight:normal;font-family:'Liberation Sans',sans-serif;">09:27</div>
<div class="a t" style="left:476.28px;top:274.10px;font-size:10.4px;height:10.4px;line-height:10.4px;color:#69707d;font-weight:normal;font-family:'Liberation Sans',sans-serif;">09:28</div>
<div class="a t" style="left:544.4200000000001px;top:274.10px;font-size:10.4px;height:10.4px;line-height:10.4px;color:#69707d;font-weight:normal;font-family:'Liberation Sans',sans-serif;">09:29</div>
<div class="a t" style="left:612.56px;top:274.10px;font-size:10.4px;height:10.4px;line-height:10.4px;color:#69707d;font-weight:normal;font-family:'Liberation Sans',sans-serif;">09:30</div>
<div class="a t" style="left:680.7px;top:274.10px;font-size:10.4px;height:10.4px;line-height:10.4px;color:#69707d;font-weight:normal;font-family:'Liberation Sans',sans-serif;">09:31</div>
<div class="a t" style="left:748.84px;top:274.10px;font-size:10.4px;height:10.4px;line-height:10.4px;color:#69707d;font-weight:normal;font-family:'Liberation Sans',sans-serif;">09:32</div>
<div class="a t" style="left:816.98px;top:274.10px;font-size:10.4px;height:10.4px;line-height:10.4px;color:#69707d;font-weight:normal;font-family:'Liberation Sans',sans-serif;">09:33</div>
<div class="a t" style="left:885.12px;top:274.10px;font-size:10.4px;height:10.4px;line-height:10.4px;color:#69707d;font-weight:normal;font-family:'Liberation Sans',sans-serif;">09:34</div>
<div class="a t" style="left:953.26px;top:274.10px;font-size:10.4px;height:10.4px;line-height:10.4px;color:#69707d;font-weight:normal;font-family:'Liberation Sans',sans-serif;">09:35</div>
<div class="a t" style="left:1021.4px;top:274.10px;font-size:10.4px;height:10.4px;line-height:10.4px;color:#69707d;font-weight:normal;font-family:'Liberation Sans',sans-serif;">09:36</div>
<div class="a t" style="left:1089.54px;top:274.10px;font-size:10.4px;height:10.4px;line-height:10.4px;color:#69707d;font-weight:normal;font-family:'Liberation Sans',sans-serif;">09:37</div>
<div class="a t" style="left:1157.68px;top:274.10px;font-size:10.4px;height:10.4px;line-height:10.4px;color:#69707d;font-weight:normal;font-family:'Liberation Sans',sans-serif;">09:38</div>
<div class="a t" style="left:1225.8200000000002px;top:274.10px;font-size:10.4px;height:10.4px;line-height:10.4px;color:#69707d;font-weight:normal;font-family:'Liberation Sans',sans-serif;">09:39</div>
<div class="a t" style="left:1293.96px;top:274.10px;font-size:10.4px;height:10.4px;line-height:10.4px;color:#69707d;font-weight:normal;font-family:'Liberation Sans',sans-serif;">09:40</div>
<div class="a t" style="left:340px;top:284.35px;font-size:9.9px;height:9.9px;line-height:9.9px;color:#69707d;font-weight:normal;font-family:'Liberation Sans',sans-serif;">July 17, 2024</div>
<div class="a t" style="left:300px;width:28.5px;text-align:right;top:196.60px;font-size:10.4px;line-height:10.4px;color:#69707d">30</div>
<div class="a t" style="left:300px;width:28.5px;text-align:right;top:208.10px;font-size:10.4px;line-height:10.4px;color:#69707d">25</div>
<div class="a t" style="left:300px;width:28.5px;text-align:right;top:219.60px;font-size:10.4px;line-height:10.4px;color:#69707d">20</div>
<div class="a t" style="left:300px;width:28.5px;text-align:right;top:231.10px;font-size:10.4px;line-height:10.4px;color:#69707d">15</div>
<div class="a t" style="left:300px;width:28.5px;text-align:right;top:242.60px;font-size:10.4px;line-height:10.4px;color:#69707d">10</div>
<div class="a t" style="left:300px;width:28.5px;text-align:right;top:254.10px;font-size:10.4px;line-height:10.4px;color:#69707d">5</div>
<div class="a t" style="left:300px;width:28.5px;text-align:right;top:265.60px;font-size:10.4px;line-height:10.4px;color:#69707d">0</div>
<div class="a t" style="left:593px;top:308.88px;font-size:12.24px;height:12.24px;line-height:12.24px;color:#343741;font-weight:normal;font-family:'Liberation Sans',sans-serif;">Jul 17, 2024 @ 09:26:02.219 - Jul 17, 2024 @ 09:41:02.219 (interval: Auto - 30 seconds)</div>
<div class="a" style="left:297px;top:331px;width:1076px;height:1px;background:#d3dae6;border-radius:0px;"></div>
<div class="a t" style="left:309.5px;top:348.30px;font-size:14.4px;height:14.4px;line-height:14.4px;color:#006bb8;font-weight:bold;font-family:'Liberation Sans',sans-serif;">Documents (733)</div>
<div class="a" style="left:305.5px;top:369px;width:125px;height:2px;background:#0077cc;border-radius:0px;"></div>
<div class="a t" style="left:450px;top:348.50px;font-size:14px;height:14px;line-height:14px;color:#1a1c21;font-weight:bold;font-family:'Liberation Sans',sans-serif;">Patterns</div>
<div class="a t" style="left:530px;top:348.50px;font-size:14px;height:14px;line-height:14px;color:#1a1c21;font-weight:bold;font-family:'Liberation Sans',sans-serif;">Field statistics</div>
<div class="a" style="left:1021px;top:340px;width:113px;height:31px;background:#fff;border:1px solid #e3e8f0;border-radius:5px;"></div>
<svg class="a" style="left:1029px;top:347px;" width="16" height="16" viewBox="0 0 16 16" fill="none"><rect x="1" y="1.5" width="14" height="13" rx="1.5" stroke="#343741" stroke-width="1.1"/><path d="M1 5h14M1 8h14M1 11h14M4.5 5v9.5" stroke="#343741" stroke-width="0.9"/></svg>
<div class="a t" style="left:1053px;top:348.80px;font-size:12.4px;height:12.4px;line-height:12.4px;color:#343741;font-weight:normal;font-family:'Liberation Sans',sans-serif;">Columns</div>
<div class="a" style="left:1110px;top:346px;width:16px;height:18px;background:#e0e5ee;border-radius:3px;"></div>
<div class="a t" style="left:1114px;top:349.50px;font-size:12px;height:12px;line-height:12px;color:#1a1c21;font-weight:bold;font-family:'Liberation Sans',sans-serif;">3</div>
<div class="a" style="left:1142px;top:340px;width:121px;height:31px;background:#fff;border:1px solid #e3e8f0;border-radius:5px;"></div>
<svg class="a" style="left:1151px;top:347px;" width="14" height="16" viewBox="0 0 14 16" fill="none"><path d="M7 1.5v13M4 4.5l3-3 3 3M4 11.5l3 3 3-3" stroke="#343741" stroke-width="1.1"/></svg>
<div class="a t" style="left:1173.5px;top:348.60px;font-size:12.8px;height:12.8px;line-height:12.8px;color:#343741;font-weight:normal;font-family:'Liberation Sans',sans-serif;">Sort fields</div>
<div class="a" style="left:1238px;top:346px;width:16px;height:18px;background:#e0e5ee;border-radius:3px;"></div>
<div class="a t" style="left:1242px;top:349.50px;font-size:12px;height:12px;line-height:12px;color:#1a1c21;font-weight:bold;font-family:'Liberation Sans',sans-serif;">1</div>
<div class="a" style="left:1271px;top:340px;width:93px;height:31px;background:#fff;border:1px solid #e3e8f0;border-radius:5px;"></div>
<div class="a" style="left:1302px;top:341px;width:1px;height:29px;background:#e3e8f0;border-radius:0px;"></div>
<div class="a" style="left:1333px;top:341px;width:1px;height:29px;background:#e3e8f0;border-radius:0px;"></div>
<svg class="a" style="left:1278px;top:348px;" width="17" height="15" viewBox="0 0 17 15" fill="none"><rect x="1" y="2" width="15" height="11" rx="1" stroke="#343741" stroke-width="1.1"/><path d="M1 5.5h15M3 8h11M3 10.5h11" stroke="#343741" stroke-width="0.9"/></svg>
<svg class="a" style="left:1310px;top:348px;" width="15" height="15" viewBox="0 0 15 15" fill="none"><path d="M1 5h13M1 10h13" stroke="#343741" stroke-width="1.1"/><circle cx="5" cy="5" r="2" fill="#fff" stroke="#343741" stroke-width="1.1"/><circle cx="10" cy="10" r="2" fill="#fff" stroke="#343741" stroke-width="1.1"/></svg>
<svg class="a" style="left:1340px;top:347px;" width="16" height="16" viewBox="0 0 16 16" fill="none"><rect x="1" y="1" width="14" height="14" rx="1.5" stroke="#343741" stroke-width="1.1"/><path d="M4 7V4h3M9 4h3v3M12 9v3H9M7 12H4V9" stroke="#343741" stroke-width="1.1"/></svg>
<div class="a t" style="left:329px;top:384.50px;font-size:12px;height:12px;line-height:12px;color:#343741;font-weight:bold;font-family:'Liberation Sans',sans-serif;">actions</div>
<svg class="a" style="left:375.2px;top:385.2px;" width="12.6" height="12.6" viewBox="0 0 12.6 12.6" fill="none"><circle cx="6.3" cy="6.3" r="5.3" stroke="#343741" stroke-width="1"/><path d="M4.5 4.9 a1.8 1.8 0 1 1 2.6 1.6 c-0.6 0.3 -0.8 0.6 -0.8 1.3" stroke="#343741" stroke-width="1" stroke-linecap="round"/><circle cx="6.3" cy="9.3" r="0.6" fill="#343741"/></svg>
<div class="a t" style="left:407px;top:384.40px;font-size:12.2px;height:12.2px;line-height:12.2px;color:#343741;font-weight:bold;font-family:'Liberation Sans',sans-serif;">@timestamp</div>
<svg class="a" style="left:483px;top:384px;" width="14" height="14" viewBox="0 0 14 14" fill="none"><circle cx="7" cy="7" r="5.8" stroke="#343741" stroke-width="1.1"/><path d="M7 3.5V7H10" stroke="#343741" stroke-width="1.1"/></svg>
<svg class="a" style="left:579px;top:384px;" width="12" height="14" viewBox="0 0 12 14" fill="none"><path d="M6 1.5v11M1.8 8.3l4.2 4.2 4.2-4.2" stroke="#343741" stroke-width="1"/></svg>
<div class="a t" style="left:613px;top:384.50px;font-size:12px;height:12px;line-height:12px;color:#343741;font-weight:bold;font-family:'Liberation Sans',sans-serif;">resource</div>
<svg class="a" style="left:667.7px;top:385.2px;" width="12.6" height="12.6" viewBox="0 0 12.6 12.6" fill="none"><circle cx="6.3" cy="6.3" r="5.3" stroke="#343741" stroke-width="1"/><path d="M4.5 4.9 a1.8 1.8 0 1 1 2.6 1.6 c-0.6 0.3 -0.8 0.6 -0.8 1.3" stroke="#343741" stroke-width="1" stroke-linecap="round"/><circle cx="6.3" cy="9.3" r="0.6" fill="#343741"/></svg>
<div class="a t" style="left:926px;top:384.50px;font-size:12px;height:12px;line-height:12px;color:#343741;font-weight:bold;font-family:'Liberation Sans',sans-serif;">content</div>
<svg class="a" style="left:974.2px;top:385.2px;" width="12.6" height="12.6" viewBox="0 0 12.6 12.6" fill="none"><circle cx="6.3" cy="6.3" r="5.3" stroke="#343741" stroke-width="1"/><path d="M4.5 4.9 a1.8 1.8 0 1 1 2.6 1.6 c-0.6 0.3 -0.8 0.6 -0.8 1.3" stroke="#343741" stroke-width="1" stroke-linecap="round"/><circle cx="6.3" cy="9.3" r="0.6" fill="#343741"/></svg>
<div class="a" style="left:297px;top:407px;width:1076px;height:1px;background:#d3dae6;border-radius:0px;"></div>
<div class="a" style="left:297px;top:407.50px;width:1076px;height:31.2px;background:#fff;border-bottom:1px solid #e3e8f0"></div>
<div class="a" style="left:302px;top:415.6px;width:15px;height:15px;background:#fff;border:1px solid #c9cfd8;border-radius:3px;"></div>
<svg class="a" style="left:326px;top:417.1px;" width="12" height="12" viewBox="0 0 12 12" fill="none"><path d="M1.5 10.5L10.5 1.5M7.5 1.5h3v3M1.5 7.5v3h3" stroke="#6f7580" stroke-width="1"/></svg>
<svg class="a" style="left:349px;top:416.1px;" width="14" height="14" viewBox="0 0 14 14" fill="none"><path d="M3 2.5v9.5h3" stroke="#343741" stroke-width="1" opacity="0.7"/><path d="M4.5 1h4.5l2.5 2.5v4M4.5 1v10.5h2" stroke="#343741" stroke-width="1.1"/><circle cx="10" cy="10.8" r="3" fill="#343741"/><path d="M8.7 10.8l0.9 0.9 1.7-1.8" stroke="#fff" stroke-width="0.9"/></svg>
<svg class="a" style="left:374px;top:416.6px;" width="12" height="13" viewBox="0 0 12 13" fill="none"><rect x="0.5" y="0.5" width="11" height="12" rx="1" stroke="#b6bdc8" stroke-width="1"/><path d="M3 3.5h6M3 6h4M5 8.5h4" stroke="#b6bdc8" stroke-width="0.9"/></svg>
<div class="a t" style="left:407px;top:419.45px;font-size:11.7px;height:11.7px;line-height:11.7px;color:#474c56;font-weight:normal;font-family:'Liberation Mono',monospace;">Jul 17, 2024 @ 09:40:54.624</div>
<div class="a" style="left:613px;top:413.90000000000003px;width:155.5px;height:18.5px;background:#fff;border:1px solid #d3dae6;border-radius:3px;"></div>
<svg class="a" style="left:622.7px;top:415.3px;" width="14" height="14" viewBox="0 0 14 14" fill="none"><path d="M7 0.9L12.5 4.1V9.9L7 13.1 1.5 9.9V4.1z" stroke="#bcc4d0" stroke-width="1.2" fill="#fff"/><path d="M4 10L5.2 8.8" stroke="#f5b648" stroke-width="1.8"/><path d="M5.2 8.8L8.8 5.2" stroke="#5b7fd9" stroke-width="1.8" stroke-dasharray="1.4 0.6"/><path d="M8.8 5.2L10.2 3.8" stroke="#f5b648" stroke-width="1.8"/></svg>
<div class="a t" style="left:641.5px;top:417.23px;font-size:11.75px;height:11.75px;line-height:11.75px;color:#1a1c21;font-weight:bold;font-family:'Liberation Sans',sans-serif;">accountingservice</div>
<svg class="a" style="left:749.0px;top:418.1px;" width="10" height="10" viewBox="0 0 10 10" fill="none"><path d="M1 3.2 L5 7 L9 3.2" stroke="#343741" stroke-width="1.2" stroke-linecap="round" stroke-linejoin="round"/></svg>
<div class="a" style="left:773.3px;top:413.90px;width:144.2px;height:18.5px;overflow:hidden"><div style="position:absolute;left:0;top:0;width:200px;height:18.5px;border:1px solid #d3dae6;border-radius:3px;background:#fff"></div><div class="t" style="position:absolute;left:8.5px;top:3px;font-size:12.15px;line-height:12.5px;font-weight:bold;color:#1a1c21">gke-miguel-otel-demo-default-pool</div></div>
<div class="a" style="left:909px;top:413.90px;width:9px;height:18.5px;background:linear-gradient(90deg,rgba(255,255,255,0),#fff 85%)"></div>
<div class="a t" style="left:935px;top:419.45px;font-size:11.7px;height:11.7px;line-height:11.7px;color:#474c56;font-weight:normal;font-family:'Liberation Mono',monospace;">waiting for kafka</div>
<div class="a" style="left:297px;top:438.70px;width:1076px;height:31.2px;background:#f5f7fa;border-bottom:1px solid #e3e8f0"></div>
<div class="a" style="left:302px;top:446.8px;width:15px;height:15px;background:#fff;border:1px solid #c9cfd8;border-radius:3px;"></div>
<svg class="a" style="left:326px;top:448.3px;" width="12" height="12" viewBox="0 0 12 12" fill="none"><path d="M1.5 10.5L10.5 1.5M7.5 1.5h3v3M1.5 7.5v3h3" stroke="#6f7580" stroke-width="1"/></svg>
<svg class="a" style="left:349px;top:447.3px;" width="14" height="14" viewBox="0 0 14 14" fill="none"><path d="M3 2.5v9.5h3" stroke="#343741" stroke-width="1" opacity="0.7"/><path d="M4.5 1h4.5l2.5 2.5v4M4.5 1v10.5h2" stroke="#343741" stroke-width="1.1"/><circle cx="10" cy="10.8" r="3" fill="#343741"/><path d="M8.7 10.8l0.9 0.9 1.7-1.8" stroke="#fff" stroke-width="0.9"/></svg>
<svg class="a" style="left:374px;top:447.8px;" width="12" height="13" viewBox="0 0 12 13" fill="none"><rect x="0.5" y="0.5" width="11" height="12" rx="1" stroke="#b6bdc8" stroke-width="1"/><path d="M3 3.5h6M3 6h4M5 8.5h4" stroke="#b6bdc8" stroke-width="0.9"/></svg>
<div class="a t" style="left:407px;top:450.65px;font-size:11.7px;height:11.7px;line-height:11.7px;color:#474c56;font-weight:normal;font-family:'Liberation Mono',monospace;">Jul 17, 2024 @ 09:40:52.519</div>
<div class="a" style="left:613px;top:445.1px;width:144.5px;height:18.5px;background:#fff;border:1px solid #d3dae6;border-radius:3px;"></div>
<svg class="a" style="left:622.7px;top:446.5px;" width="14" height="14" viewBox="0 0 14 14" fill="none"><path d="M7 0.9L12.5 4.1V9.9L7 13.1 1.5 9.9V4.1z" stroke="#bcc4d0" stroke-width="1.2" fill="#fff"/><path d="M4 10L5.2 8.8" stroke="#f5b648" stroke-width="1.8"/><path d="M5.2 8.8L8.8 5.2" stroke="#5b7fd9" stroke-width="1.8" stroke-dasharray="1.4 0.6"/><path d="M8.8 5.2L10.2 3.8" stroke="#f5b648" stroke-width="1.8"/></svg>
<div class="a t" style="left:641.5px;top:448.43px;font-size:11.75px;height:11.75px;line-height:11.75px;color:#1a1c21;font-weight:bold;font-family:'Liberation Sans',sans-serif;">checkoutservice</div>
<svg class="a" style="left:738.3px;top:449.3px;" width="10" height="10" viewBox="0 0 10 10" fill="none"><path d="M1 3.2 L5 7 L9 3.2" stroke="#343741" stroke-width="1.2" stroke-linecap="round" stroke-linejoin="round"/></svg>
<div class="a" style="left:762px;top:445.10px;width:155.5px;height:18.5px;overflow:hidden"><div style="position:absolute;left:0;top:0;width:200px;height:18.5px;border:1px solid #d3dae6;border-radius:3px;background:#fff"></div><div class="t" style="position:absolute;left:8.5px;top:3px;font-size:12.15px;line-height:12.5px;font-weight:bold;color:#1a1c21">gke-miguel-otel-demo-default-pool</div></div>
<div class="a" style="left:909px;top:445.10px;width:9px;height:18.5px;background:linear-gradient(90deg,rgba(255,255,255,0),#f5f7fa 85%)"></div>
<div class="a t" style="left:935px;top:450.65px;font-size:11.7px;height:11.7px;line-height:11.7px;color:#474c56;font-weight:normal;font-family:'Liberation Mono',monospace;">waiting for kafka</div>
<div class="a" style="left:297px;top:469.90px;width:1076px;height:31.2px;background:#fff;border-bottom:1px solid #e3e8f0"></div>
<div class="a" style="left:302px;top:478.0px;width:15px;height:15px;background:#fff;border:1px solid #c9cfd8;border-radius:3px;"></div>
<svg class="a" style="left:326px;top:479.5px;" width="12" height="12" viewBox="0 0 12 12" fill="none"><path d="M1.5 10.5L10.5 1.5M7.5 1.5h3v3M1.5 7.5v3h3" stroke="#6f7580" stroke-width="1"/></svg>
<svg class="a" style="left:349px;top:478.5px;" width="14" height="14" viewBox="0 0 14 14" fill="none"><path d="M3 2.5v9.5h3" stroke="#343741" stroke-width="1" opacity="0.7"/><path d="M4.5 1h4.5l2.5 2.5v4M4.5 1v10.5h2" stroke="#343741" stroke-width="1.1"/><circle cx="10" cy="10.8" r="3" fill="#343741"/><path d="M8.7 10.8l0.9 0.9 1.7-1.8" stroke="#fff" stroke-width="0.9"/></svg>
<svg class="a" style="left:374px;top:479.0px;" width="12" height="13" viewBox="0 0 12 13" fill="none"><rect x="0.5" y="0.5" width="11" height="12" rx="1" stroke="#b6bdc8" stroke-width="1"/><path d="M3 3.5h6M3 6h4M5 8.5h4" stroke="#b6bdc8" stroke-width="0.9"/></svg>
<div class="a t" style="left:407px;top:481.85px;font-size:11.7px;height:11.7px;line-height:11.7px;color:#474c56;font-weight:normal;font-family:'Liberation Mono',monospace;">Jul 17, 2024 @ 09:40:51.616</div>
<div class="a" style="left:613px;top:476.3px;width:155.5px;height:18.5px;background:#fff;border:1px solid #d3dae6;border-radius:3px;"></div>
<svg class="a" style="left:622.7px;top:477.7px;" width="14" height="14" viewBox="0 0 14 14" fill="none"><path d="M7 0.9L12.5 4.1V9.9L7 13.1 1.5 9.9V4.1z" stroke="#bcc4d0" stroke-width="1.2" fill="#fff"/><path d="M4 10L5.2 8.8" stroke="#f5b648" stroke-width="1.8"/><path d="M5.2 8.8L8.8 5.2" stroke="#5b7fd9" stroke-width="1.8" stroke-dasharray="1.4 0.6"/><path d="M8.8 5.2L10.2 3.8" stroke="#f5b648" stroke-width="1.8"/></svg>
<div class="a t" style="left:641.5px;top:479.62px;font-size:11.75px;height:11.75px;line-height:11.75px;color:#1a1c21;font-weight:bold;font-family:'Liberation Sans',sans-serif;">accountingservice</div>
<svg class="a" style="left:749.0px;top:480.5px;" width="10" height="10" viewBox="0 0 10 10" fill="none"><path d="M1 3.2 L5 7 L9 3.2" stroke="#343741" stroke-width="1.2" stroke-linecap="round" stroke-linejoin="round"/></svg>
<div class="a" style="left:773.3px;top:476.30px;width:144.2px;height:18.5px;overflow:hidden"><div style="position:absolute;left:0;top:0;width:200px;height:18.5px;border:1px solid #d3dae6;border-radius:3px;background:#fff"></div><div class="t" style="position:absolute;left:8.5px;top:3px;font-size:12.15px;line-height:12.5px;font-weight:bold;color:#1a1c21">gke-miguel-otel-demo-default-pool</div></div>
<div class="a" style="left:909px;top:476.30px;width:9px;height:18.5px;background:linear-gradient(90deg,rgba(255,255,255,0),#fff 85%)"></div>
<div class="a t" style="left:935px;top:481.85px;font-size:11.7px;height:11.7px;line-height:11.7px;color:#474c56;font-weight:normal;font-family:'Liberation Mono',monospace;">waiting for kafka</div>
<div class="a" style="left:297px;top:501.10px;width:1076px;height:31.2px;background:#f5f7fa;border-bottom:1px solid #e3e8f0"></div>
<div class="a" style="left:302px;top:509.20000000000005px;width:15px;height:15px;background:#fff;border:1px solid #c9cfd8;border-radius:3px;"></div>
<svg class="a" style="left:326px;top:510.70000000000005px;" width="12" height="12" viewBox="0 0 12 12" fill="none"><path d="M1.5 10.5L10.5 1.5M7.5 1.5h3v3M1.5 7.5v3h3" stroke="#6f7580" stroke-width="1"/></svg>
<svg class="a" style="left:349px;top:509.70000000000005px;" width="14" height="14" viewBox="0 0 14 14" fill="none"><path d="M3 2.5v9.5h3" stroke="#343741" stroke-width="1" opacity="0.7"/><path d="M4.5 1h4.5l2.5 2.5v4M4.5 1v10.5h2" stroke="#343741" stroke-width="1.1"/><circle cx="10" cy="10.8" r="3" fill="#343741"/><path d="M8.7 10.8l0.9 0.9 1.7-1.8" stroke="#fff" stroke-width="0.9"/></svg>
<svg class="a" style="left:374px;top:510.20000000000005px;" width="12" height="13" viewBox="0 0 12 13" fill="none"><rect x="0.5" y="0.5" width="11" height="12" rx="1" stroke="#b6bdc8" stroke-width="1"/><path d="M3 3.5h6M3 6h4M5 8.5h4" stroke="#b6bdc8" stroke-width="0.9"/></svg>
<div class="a t" style="left:407px;top:513.05px;font-size:11.7px;height:11.7px;line-height:11.7px;color:#474c56;font-weight:normal;font-family:'Liberation Mono',monospace;">Jul 17, 2024 @ 09:40:49.511</div>
<div class="a" style="left:613px;top:507.50000000000006px;width:144.5px;height:18.5px;background:#fff;border:1px solid #d3dae6;border-radius:3px;"></div>
<svg class="a" style="left:622.7px;top:508.90000000000003px;" width="14" height="14" viewBox="0 0 14 14" fill="none"><path d="M7 0.9L12.5 4.1V9.9L7 13.1 1.5 9.9V4.1z" stroke="#bcc4d0" stroke-width="1.2" fill="#fff"/><path d="M4 10L5.2 8.8" stroke="#f5b648" stroke-width="1.8"/><path d="M5.2 8.8L8.8 5.2" stroke="#5b7fd9" stroke-width="1.8" stroke-dasharray="1.4 0.6"/><path d="M8.8 5.2L10.2 3.8" stroke="#f5b648" stroke-width="1.8"/></svg>
<div class="a t" style="left:641.5px;top:510.83px;font-size:11.75px;height:11.75px;line-height:11.75px;color:#1a1c21;font-weight:bold;font-family:'Liberation Sans',sans-serif;">checkoutservice</div>
<svg class="a" style="left:738.3px;top:511.70000000000005px;" width="10" height="10" viewBox="0 0 10 10" fill="none"><path d="M1 3.2 L5 7 L9 3.2" stroke="#343741" stroke-width="1.2" stroke-linecap="round" stroke-linejoin="round"/></svg>
<div class="a" style="left:762px;top:507.50px;width:155.5px;height:18.5px;overflow:hidden"><div style="position:absolute;left:0;top:0;width:200px;height:18.5px;border:1px solid #d3dae6;border-radius:3px;background:#fff"></div><div class="t" style="position:absolute;left:8.5px;top:3px;font-size:12.15px;line-height:12.5px;font-weight:bold;color:#1a1c21">gke-miguel-otel-demo-default-pool</div></div>
<div class="a" style="left:909px;top:507.50px;width:9px;height:18.5px;background:linear-gradient(90deg,rgba(255,255,255,0),#f5f7fa 85%)"></div>
<div class="a t" style="left:935px;top:513.05px;font-size:11.7px;height:11.7px;line-height:11.7px;color:#474c56;font-weight:normal;font-family:'Liberation Mono',monospace;">waiting for kafka</div>
<div class="a" style="left:297px;top:532.30px;width:1076px;height:31.2px;background:#fff;border-bottom:1px solid #e3e8f0"></div>
<div class="a" style="left:302px;top:540.4px;width:15px;height:15px;background:#fff;border:1px solid #c9cfd8;border-radius:3px;"></div>
<svg class="a" style="left:326px;top:541.9px;" width="12" height="12" viewBox="0 0 12 12" fill="none"><path d="M1.5 10.5L10.5 1.5M7.5 1.5h3v3M1.5 7.5v3h3" stroke="#6f7580" stroke-width="1"/></svg>
<svg class="a" style="left:349px;top:540.9px;" width="14" height="14" viewBox="0 0 14 14" fill="none"><path d="M3 2.5v9.5h3" stroke="#343741" stroke-width="1" opacity="0.7"/><path d="M4.5 1h4.5l2.5 2.5v4M4.5 1v10.5h2" stroke="#343741" stroke-width="1.1"/><circle cx="10" cy="10.8" r="3" fill="#343741"/><path d="M8.7 10.8l0.9 0.9 1.7-1.8" stroke="#fff" stroke-width="0.9"/></svg>
<svg class="a" style="left:374px;top:541.4px;" width="12" height="13" viewBox="0 0 12 13" fill="none"><rect x="0.5" y="0.5" width="11" height="12" rx="1" stroke="#b6bdc8" stroke-width="1"/><path d="M3 3.5h6M3 6h4M5 8.5h4" stroke="#b6bdc8" stroke-width="0.9"/></svg>
<div class="a t" style="left:407px;top:544.25px;font-size:11.7px;height:11.7px;line-height:11.7px;color:#474c56;font-weight:normal;font-family:'Liberation Mono',monospace;">Jul 17, 2024 @ 09:40:48.608</div>
<div class="a" style="left:613px;top:538.6999999999999px;width:155.5px;height:18.5px;background:#fff;border:1px solid #d3dae6;border-radius:3px;"></div>
<svg class="a" style="left:622.7px;top:540.1px;" width="14" height="14" viewBox="0 0 14 14" fill="none"><path d="M7 0.9L12.5 4.1V9.9L7 13.1 1.5 9.9V4.1z" stroke="#bcc4d0" stroke-width="1.2" fill="#fff"/><path d="M4 10L5.2 8.8" stroke="#f5b648" stroke-width="1.8"/><path d="M5.2 8.8L8.8 5.2" stroke="#5b7fd9" stroke-width="1.8" stroke-dasharray="1.4 0.6"/><path d="M8.8 5.2L10.2 3.8" stroke="#f5b648" stroke-width="1.8"/></svg>
<div class="a t" style="left:641.5px;top:542.02px;font-size:11.75px;height:11.75px;line-height:11.75px;color:#1a1c21;font-weight:bold;font-family:'Liberation Sans',sans-serif;">accountingservice</div>
<svg class="a" style="left:749.0px;top:542.9px;" width="10" height="10" viewBox="0 0 10 10" fill="none"><path d="M1 3.2 L5 7 L9 3.2" stroke="#343741" stroke-width="1.2" stroke-linecap="round" stroke-linejoin="round"/></svg>
<div class="a" style="left:773.3px;top:538.70px;width:144.2px;height:18.5px;overflow:hidden"><div style="position:absolute;left:0;top:0;width:200px;height:18.5px;border:1px solid #d3dae6;border-radius:3px;background:#fff"></div><div class="t" style="position:absolute;left:8.5px;top:3px;font-size:12.15px;line-height:12.5px;font-weight:bold;color:#1a1c21">gke-miguel-otel-demo-default-pool</div></div>
<div class="a" style="left:909px;top:538.70px;width:9px;height:18.5px;background:linear-gradient(90deg,rgba(255,255,255,0),#fff 85%)"></div>
<div class="a t" style="left:935px;top:544.25px;font-size:11.7px;height:11.7px;line-height:11.7px;color:#474c56;font-weight:normal;font-family:'Liberation Mono',monospace;">waiting for kafka</div>
<div class="a" style="left:297px;top:563.50px;width:1076px;height:31.2px;background:#f5f7fa;border-bottom:1px solid #e3e8f0"></div>
<div class="a" style="left:302px;top:571.6px;width:15px;height:15px;background:#fff;border:1px solid #c9cfd8;border-radius:3px;"></div>
<svg class="a" style="left:326px;top:573.1px;" width="12" height="12" viewBox="0 0 12 12" fill="none"><path d="M1.5 10.5L10.5 1.5M7.5 1.5h3v3M1.5 7.5v3h3" stroke="#6f7580" stroke-width="1"/></svg>
<svg class="a" style="left:349px;top:572.1px;" width="14" height="14" viewBox="0 0 14 14" fill="none"><path d="M3 2.5v9.5h3" stroke="#343741" stroke-width="1" opacity="0.7"/><path d="M4.5 1h4.5l2.5 2.5v4M4.5 1v10.5h2" stroke="#343741" stroke-width="1.1"/><circle cx="10" cy="10.8" r="3" fill="#343741"/><path d="M8.7 10.8l0.9 0.9 1.7-1.8" stroke="#fff" stroke-width="0.9"/></svg>
<svg class="a" style="left:374px;top:572.6px;" width="12" height="13" viewBox="0 0 12 13" fill="none"><rect x="0.5" y="0.5" width="11" height="12" rx="1" stroke="#b6bdc8" stroke-width="1"/><path d="M3 3.5h6M3 6h4M5 8.5h4" stroke="#b6bdc8" stroke-width="0.9"/></svg>
<div class="a t" style="left:407px;top:575.45px;font-size:11.7px;height:11.7px;line-height:11.7px;color:#474c56;font-weight:normal;font-family:'Liberation Mono',monospace;">Jul 17, 2024 @ 09:40:46.503</div>
<div class="a" style="left:613px;top:569.9px;width:144.5px;height:18.5px;background:#fff;border:1px solid #d3dae6;border-radius:3px;"></div>
<svg class="a" style="left:622.7px;top:571.3000000000001px;" width="14" height="14" viewBox="0 0 14 14" fill="none"><path d="M7 0.9L12.5 4.1V9.9L7 13.1 1.5 9.9V4.1z" stroke="#bcc4d0" stroke-width="1.2" fill="#fff"/><path d="M4 10L5.2 8.8" stroke="#f5b648" stroke-width="1.8"/><path d="M5.2 8.8L8.8 5.2" stroke="#5b7fd9" stroke-width="1.8" stroke-dasharray="1.4 0.6"/><path d="M8.8 5.2L10.2 3.8" stroke="#f5b648" stroke-width="1.8"/></svg>
<div class="a t" style="left:641.5px;top:573.23px;font-size:11.75px;height:11.75px;line-height:11.75px;color:#1a1c21;font-weight:bold;font-family:'Liberation Sans',sans-serif;">checkoutservice</div>
<svg class="a" style="left:738.3px;top:574.1px;" width="10" height="10" viewBox="0 0 10 10" fill="none"><path d="M1 3.2 L5 7 L9 3.2" stroke="#343741" stroke-width="1.2" stroke-linecap="round" stroke-linejoin="round"/></svg>
<div class="a" style="left:762px;top:569.90px;width:155.5px;height:18.5px;overflow:hidden"><div style="position:absolute;left:0;top:0;width:200px;height:18.5px;border:1px solid #d3dae6;border-radius:3px;background:#fff"></div><div class="t" style="position:absolute;left:8.5px;top:3px;font-size:12.15px;line-height:12.5px;font-weight:bold;color:#1a1c21">gke-miguel-otel-demo-default-pool</div></div>
<div class="a" style="left:909px;top:569.90px;width:9px;height:18.5px;background:linear-gradient(90deg,rgba(255,255,255,0),#f5f7fa 85%)"></div>
<div class="a t" style="left:935px;top:575.45px;font-size:11.7px;height:11.7px;line-height:11.7px;color:#474c56;font-weight:normal;font-family:'Liberation Mono',monospace;">waiting for kafka</div>
<div class="a" style="left:297px;top:594.70px;width:1076px;height:31.2px;background:#fff;border-bottom:1px solid #e3e8f0"></div>
<div class="a" style="left:302px;top:602.8000000000001px;width:15px;height:15px;background:#fff;border:1px solid #c9cfd8;border-radius:3px;"></div>
<svg class="a" style="left:326px;top:604.3000000000001px;" width="12" height="12" viewBox="0 0 12 12" fill="none"><path d="M1.5 10.5L10.5 1.5M7.5 1.5h3v3M1.5 7.5v3h3" stroke="#6f7580" stroke-width="1"/></svg>
<svg class="a" style="left:349px;top:603.3000000000001px;" width="14" height="14" viewBox="0 0 14 14" fill="none"><path d="M3 2.5v9.5h3" stroke="#343741" stroke-width="1" opacity="0.7"/><path d="M4.5 1h4.5l2.5 2.5v4M4.5 1v10.5h2" stroke="#343741" stroke-width="1.1"/><circle cx="10" cy="10.8" r="3" fill="#343741"/><path d="M8.7 10.8l0.9 0.9 1.7-1.8" stroke="#fff" stroke-width="0.9"/></svg>
<svg class="a" style="left:374px;top:603.8000000000001px;" width="12" height="13" viewBox="0 0 12 13" fill="none"><rect x="0.5" y="0.5" width="11" height="12" rx="1" stroke="#b6bdc8" stroke-width="1"/><path d="M3 3.5h6M3 6h4M5 8.5h4" stroke="#b6bdc8" stroke-width="0.9"/></svg>
<div class="a t" style="left:407px;top:606.65px;font-size:11.7px;height:11.7px;line-height:11.7px;color:#474c56;font-weight:normal;font-family:'Liberation Mono',monospace;">Jul 17, 2024 @ 09:40:45.600</div>
<div class="a" style="left:613px;top:601.1px;width:155.5px;height:18.5px;background:#fff;border:1px solid #d3dae6;border-radius:3px;"></div>
<svg class="a" style="left:622.7px;top:602.5000000000001px;" width="14" height="14" viewBox="0 0 14 14" fill="none"><path d="M7 0.9L12.5 4.1V9.9L7 13.1 1.5 9.9V4.1z" stroke="#bcc4d0" stroke-width="1.2" fill="#fff"/><path d="M4 10L5.2 8.8" stroke="#f5b648" stroke-width="1.8"/><path d="M5.2 8.8L8.8 5.2" stroke="#5b7fd9" stroke-width="1.8" stroke-dasharray="1.4 0.6"/><path d="M8.8 5.2L10.2 3.8" stroke="#f5b648" stroke-width="1.8"/></svg>
<div class="a t" style="left:641.5px;top:604.43px;font-size:11.75px;height:11.75px;line-height:11.75px;color:#1a1c21;font-weight:bold;font-family:'Liberation Sans',sans-serif;">accountingservice</div>
<svg class="a" style="left:749.0px;top:605.3000000000001px;" width="10" height="10" viewBox="0 0 10 10" fill="none"><path d="M1 3.2 L5 7 L9 3.2" stroke="#343741" stroke-width="1.2" stroke-linecap="round" stroke-linejoin="round"/></svg>
<div class="a" style="left:773.3px;top:601.10px;width:144.2px;height:18.5px;overflow:hidden"><div style="position:absolute;left:0;top:0;width:200px;height:18.5px;border:1px solid #d3dae6;border-radius:3px;background:#fff"></div><div class="t" style="position:absolute;left:8.5px;top:3px;font-size:12.15px;line-height:12.5px;font-weight:bold;color:#1a1c21">gke-miguel-otel-demo-default-pool</div></div>
<div class="a" style="left:909px;top:601.10px;width:9px;height:18.5px;background:linear-gradient(90deg,rgba(255,255,255,0),#fff 85%)"></div>
<div class="a t" style="left:935px;top:606.65px;font-size:11.7px;height:11.7px;line-height:11.7px;color:#474c56;font-weight:normal;font-family:'Liberation Mono',monospace;">waiting for kafka</div>
<div class="a" style="left:297px;top:625.90px;width:1076px;height:31.2px;background:#fef7e6;border-bottom:1px solid #e3e8f0"></div>
<div class="a" style="left:302px;top:634.0px;width:15px;height:15px;background:#fff;border:1px solid #c9cfd8;border-radius:3px;"></div>
<svg class="a" style="left:326px;top:635.5px;" width="12" height="12" viewBox="0 0 12 12" fill="none"><path d="M11 1L7 5M7 2v3h3M1 11l4-4M5 10V7H2" stroke="#0077cc" stroke-width="1.1"/></svg>
<svg class="a" style="left:349px;top:634.5px;" width="14" height="14" viewBox="0 0 14 14" fill="none"><path d="M3 2.5v9.5h3" stroke="#343741" stroke-width="1" opacity="0.7"/><path d="M4.5 1h4.5l2.5 2.5v4M4.5 1v10.5h2" stroke="#343741" stroke-width="1.1"/><circle cx="10" cy="10.8" r="3" fill="#343741"/><path d="M8.7 10.8l0.9 0.9 1.7-1.8" stroke="#fff" stroke-width="0.9"/></svg>
<svg class="a" style="left:374px;top:635.0px;" width="12" height="13" viewBox="0 0 12 13" fill="none"><rect x="0.5" y="0.5" width="11" height="12" rx="1" stroke="#b6bdc8" stroke-width="1"/><path d="M3 3.5h6M3 6h4M5 8.5h4" stroke="#b6bdc8" stroke-width="0.9"/></svg>
<div class="a t" style="left:407px;top:637.85px;font-size:11.7px;height:11.7px;line-height:11.7px;color:#474c56;font-weight:normal;font-family:'Liberation Mono',monospace;">Jul 17, 2024 @ 09:40:43.495</div>
<div class="a" style="left:613px;top:632.3px;width:144.5px;height:18.5px;background:#fff;border:1px solid #d3dae6;border-radius:3px;"></div>
<svg class="a" style="left:622.7px;top:633.7px;" width="14" height="14" viewBox="0 0 14 14" fill="none"><path d="M7 0.9L12.5 4.1V9.9L7 13.1 1.5 9.9V4.1z" stroke="#bcc4d0" stroke-width="1.2" fill="#fff"/><path d="M4 10L5.2 8.8" stroke="#f5b648" stroke-width="1.8"/><path d="M5.2 8.8L8.8 5.2" stroke="#5b7fd9" stroke-width="1.8" stroke-dasharray="1.4 0.6"/><path d="M8.8 5.2L10.2 3.8" stroke="#f5b648" stroke-width="1.8"/></svg>
<div class="a t" style="left:641.5px;top:635.62px;font-size:11.75px;height:11.75px;line-height:11.75px;color:#1a1c21;font-weight:bold;font-family:'Liberation Sans',sans-serif;">checkoutservice</div>
<svg class="a" style="left:738.3px;top:636.5px;" width="10" height="10" viewBox="0 0 10 10" fill="none"><path d="M1 3.2 L5 7 L9 3.2" stroke="#343741" stroke-width="1.2" stroke-linecap="round" stroke-linejoin="round"/></svg>
<div class="a" style="left:762px;top:632.30px;width:155.5px;height:18.5px;overflow:hidden"><div style="position:absolute;left:0;top:0;width:200px;height:18.5px;border:1px solid #d3dae6;border-radius:3px;background:#fff"></div><div class="t" style="position:absolute;left:8.5px;top:3px;font-size:12.15px;line-height:12.5px;font-weight:bold;color:#1a1c21">gke-miguel-otel-demo-default-pool</div></div>
<div class="a" style="left:909px;top:632.30px;width:9px;height:18.5px;background:linear-gradient(90deg,rgba(255,255,255,0),#fef7e6 85%)"></div>
<div class="a t" style="left:935px;top:637.85px;font-size:11.7px;height:11.7px;line-height:11.7px;color:#474c56;font-weight:normal;font-family:'Liberation Mono',monospace;">waiting for kafka</div>
<div class="a" style="left:297px;top:657.10px;width:1076px;height:31.2px;background:#fff;border-bottom:1px solid #e3e8f0"></div>
<div class="a" style="left:302px;top:665.2px;width:15px;height:15px;background:#fff;border:1px solid #c9cfd8;border-radius:3px;"></div>
<svg class="a" style="left:326px;top:666.7px;" width="12" height="12" viewBox="0 0 12 12" fill="none"><path d="M1.5 10.5L10.5 1.5M7.5 1.5h3v3M1.5 7.5v3h3" stroke="#6f7580" stroke-width="1"/></svg>
<svg class="a" style="left:349px;top:665.7px;" width="14" height="14" viewBox="0 0 14 14" fill="none"><path d="M3 2.5v9.5h3" stroke="#343741" stroke-width="1" opacity="0.7"/><path d="M4.5 1h4.5l2.5 2.5v4M4.5 1v10.5h2" stroke="#343741" stroke-width="1.1"/><circle cx="10" cy="10.8" r="3" fill="#343741"/><path d="M8.7 10.8l0.9 0.9 1.7-1.8" stroke="#fff" stroke-width="0.9"/></svg>
<svg class="a" style="left:374px;top:666.2px;" width="12" height="13" viewBox="0 0 12 13" fill="none"><rect x="0.5" y="0.5" width="11" height="12" rx="1" stroke="#b6bdc8" stroke-width="1"/><path d="M3 3.5h6M3 6h4M5 8.5h4" stroke="#b6bdc8" stroke-width="0.9"/></svg>
<div class="a t" style="left:407px;top:669.05px;font-size:11.7px;height:11.7px;line-height:11.7px;color:#474c56;font-weight:normal;font-family:'Liberation Mono',monospace;">Jul 17, 2024 @ 09:40:42.998</div>
<div class="a" style="left:613px;top:663.5px;width:295.5px;height:18.5px;background:#fff;border:1px solid #d3dae6;border-radius:3px;"></div>
<div class="a t" style="left:622px;top:666.68px;font-size:12.05px;height:12.05px;line-height:12.05px;color:#1a1c21;font-weight:bold;font-family:'Liberation Sans',sans-serif;">gke-miguel-otel-demo-default-pool-caed2bc5-</div>
<svg class="a" style="left:889.0px;top:667.7px;" width="10" height="10" viewBox="0 0 10 10" fill="none"><path d="M1 3.2 L5 7 L9 3.2" stroke="#343741" stroke-width="1.2" stroke-linecap="round" stroke-linejoin="round"/></svg>
<div class="a" style="left:911px;top:663.50px;width:6.5px;height:18.5px;overflow:hidden"><div style="position:absolute;left:0;top:0;width:20px;height:18.5px;border:1px solid #d3dae6;border-radius:3px;background:#fff"></div></div>
<div class="a t" style="left:935px;top:669.05px;font-size:11.7px;height:11.7px;line-height:11.7px;color:#474c56;font-weight:normal;font-family:'Liberation Mono',monospace;">I0717 08:40:42.998152 1 client.go:210] "Connect to server" &hellip;</div>
<div class="a" style="left:297px;top:688.30px;width:1076px;height:31.2px;background:#f5f7fa;border-bottom:1px solid #e3e8f0"></div>
<div class="a" style="left:302px;top:696.4px;width:15px;height:15px;background:#fff;border:1px solid #c9cfd8;border-radius:3px;"></div>
<svg class="a" style="left:326px;top:697.9px;" width="12" height="12" viewBox="0 0 12 12" fill="none"><path d="M1.5 10.5L10.5 1.5M7.5 1.5h3v3M1.5 7.5v3h3" stroke="#6f7580" stroke-width="1"/></svg>
<svg class="a" style="left:349px;top:696.9px;" width="14" height="14" viewBox="0 0 14 14" fill="none"><path d="M3 2.5v9.5h3" stroke="#343741" stroke-width="1" opacity="0.7"/><path d="M4.5 1h4.5l2.5 2.5v4M4.5 1v10.5h2" stroke="#343741" stroke-width="1.1"/><circle cx="10" cy="10.8" r="3" fill="#343741"/><path d="M8.7 10.8l0.9 0.9 1.7-1.8" stroke="#fff" stroke-width="0.9"/></svg>
<svg class="a" style="left:374px;top:697.4px;" width="12" height="13" viewBox="0 0 12 13" fill="none"><rect x="0.5" y="0.5" width="11" height="12" rx="1" stroke="#b6bdc8" stroke-width="1"/><path d="M3 3.5h6M3 6h4M5 8.5h4" stroke="#b6bdc8" stroke-width="0.9"/></svg>
<div class="a t" style="left:407px;top:700.25px;font-size:11.7px;height:11.7px;line-height:11.7px;color:#474c56;font-weight:normal;font-family:'Liberation Mono',monospace;">Jul 17, 2024 @ 09:40:42.592</div>
<div class="a" style="left:613px;top:694.6999999999999px;width:155.5px;height:18.5px;background:#fff;border:1px solid #d3dae6;border-radius:3px;"></div>
<svg class="a" style="left:622.7px;top:696.1px;" width="14" height="14" viewBox="0 0 14 14" fill="none"><path d="M7 0.9L12.5 4.1V9.9L7 13.1 1.5 9.9V4.1z" stroke="#bcc4d0" stroke-width="1.2" fill="#fff"/><path d="M4 10L5.2 8.8" stroke="#f5b648" stroke-width="1.8"/><path d="M5.2 8.8L8.8 5.2" stroke="#5b7fd9" stroke-width="1.8" stroke-dasharray="1.4 0.6"/><path d="M8.8 5.2L10.2 3.8" stroke="#f5b648" stroke-width="1.8"/></svg>
<div class="a t" style="left:641.5px;top:698.02px;font-size:11.75px;height:11.75px;line-height:11.75px;color:#1a1c21;font-weight:bold;font-family:'Liberation Sans',sans-serif;">accountingservice</div>
<svg class="a" style="left:749.0px;top:698.9px;" width="10" height="10" viewBox="0 0 10 10" fill="none"><path d="M1 3.2 L5 7 L9 3.2" stroke="#343741" stroke-width="1.2" stroke-linecap="round" stroke-linejoin="round"/></svg>
<div class="a" style="left:773.3px;top:694.70px;width:144.2px;height:18.5px;overflow:hidden"><div style="position:absolute;left:0;top:0;width:200px;height:18.5px;border:1px solid #d3dae6;border-radius:3px;background:#fff"></div><div class="t" style="position:absolute;left:8.5px;top:3px;font-size:12.15px;line-height:12.5px;font-weight:bold;color:#1a1c21">gke-miguel-otel-demo-default-pool</div></div>
<div class="a" style="left:909px;top:694.70px;width:9px;height:18.5px;background:linear-gradient(90deg,rgba(255,255,255,0),#f5f7fa 85%)"></div>
<div class="a t" style="left:935px;top:700.25px;font-size:11.7px;height:11.7px;line-height:11.7px;color:#474c56;font-weight:normal;font-family:'Liberation Mono',monospace;">waiting for kafka</div>
<div class="a" style="left:297px;top:719.50px;width:1076px;height:31.2px;background:#fff;border-bottom:1px solid #e3e8f0"></div>
<div class="a" style="left:302px;top:727.6px;width:15px;height:15px;background:#fff;border:1px solid #c9cfd8;border-radius:3px;"></div>
<svg class="a" style="left:326px;top:729.1px;" width="12" height="12" viewBox="0 0 12 12" fill="none"><path d="M1.5 10.5L10.5 1.5M7.5 1.5h3v3M1.5 7.5v3h3" stroke="#6f7580" stroke-width="1"/></svg>
<svg class="a" style="left:349px;top:728.1px;" width="14" height="14" viewBox="0 0 14 14" fill="none"><path d="M3 2.5v9.5h3" stroke="#343741" stroke-width="1" opacity="0.7"/><path d="M4.5 1h4.5l2.5 2.5v4M4.5 1v10.5h2" stroke="#343741" stroke-width="1.1"/><circle cx="10" cy="10.8" r="3" fill="#343741"/><path d="M8.7 10.8l0.9 0.9 1.7-1.8" stroke="#fff" stroke-width="0.9"/></svg>
<svg class="a" style="left:374px;top:728.6px;" width="12" height="13" viewBox="0 0 12 13" fill="none"><rect x="0.5" y="0.5" width="11" height="12" rx="1" stroke="#b6bdc8" stroke-width="1"/><path d="M3 3.5h6M3 6h4M5 8.5h4" stroke="#b6bdc8" stroke-width="0.9"/></svg>
<div class="a t" style="left:407px;top:731.45px;font-size:11.7px;height:11.7px;line-height:11.7px;color:#474c56;font-weight:normal;font-family:'Liberation Mono',monospace;">Jul 17, 2024 @ 09:40:40.488</div>
<div class="a" style="left:613px;top:725.9px;width:144.5px;height:18.5px;background:#fff;border:1px solid #d3dae6;border-radius:3px;"></div>
<svg class="a" style="left:622.7px;top:727.3000000000001px;" width="14" height="14" viewBox="0 0 14 14" fill="none"><path d="M7 0.9L12.5 4.1V9.9L7 13.1 1.5 9.9V4.1z" stroke="#bcc4d0" stroke-width="1.2" fill="#fff"/><path d="M4 10L5.2 8.8" stroke="#f5b648" stroke-width="1.8"/><path d="M5.2 8.8L8.8 5.2" stroke="#5b7fd9" stroke-width="1.8" stroke-dasharray="1.4 0.6"/><path d="M8.8 5.2L10.2 3.8" stroke="#f5b648" stroke-width="1.8"/></svg>
<div class="a t" style="left:641.5px;top:729.23px;font-size:11.75px;height:11.75px;line-height:11.75px;color:#1a1c21;font-weight:bold;font-family:'Liberation Sans',sans-serif;">checkoutservice</div>
<svg class="a" style="left:738.3px;top:730.1px;" width="10" height="10" viewBox="0 0 10 10" fill="none"><path d="M1 3.2 L5 7 L9 3.2" stroke="#343741" stroke-width="1.2" stroke-linecap="round" stroke-linejoin="round"/></svg>
<div class="a" style="left:762px;top:725.90px;width:155.5px;height:18.5px;overflow:hidden"><div style="position:absolute;left:0;top:0;width:200px;height:18.5px;border:1px solid #d3dae6;border-radius:3px;background:#fff"></div><div class="t" style="position:absolute;left:8.5px;top:3px;font-size:12.15px;line-height:12.5px;font-weight:bold;color:#1a1c21">gke-miguel-otel-demo-default-pool</div></div>
<div class="a" style="left:909px;top:725.90px;width:9px;height:18.5px;background:linear-gradient(90deg,rgba(255,255,255,0),#fff 85%)"></div>
<div class="a t" style="left:935px;top:731.45px;font-size:11.7px;height:11.7px;line-height:11.7px;color:#474c56;font-weight:normal;font-family:'Liberation Mono',monospace;">waiting for kafka</div>
<div class="a" style="left:297px;top:750.70px;width:1076px;height:31.2px;background:#f5f7fa;border-bottom:1px solid #e3e8f0"></div>
<div class="a" style="left:302px;top:758.8000000000001px;width:15px;height:15px;background:#fff;border:1px solid #c9cfd8;border-radius:3px;"></div>
<svg class="a" style="left:326px;top:760.3000000000001px;" width="12" height="12" viewBox="0 0 12 12" fill="none"><path d="M1.5 10.5L10.5 1.5M7.5 1.5h3v3M1.5 7.5v3h3" stroke="#6f7580" stroke-width="1"/></svg>
<svg class="a" style="left:349px;top:759.3000000000001px;" width="14" height="14" viewBox="0 0 14 14" fill="none"><path d="M3 2.5v9.5h3" stroke="#343741" stroke-width="1" opacity="0.7"/><path d="M4.5 1h4.5l2.5 2.5v4M4.5 1v10.5h2" stroke="#343741" stroke-width="1.1"/><circle cx="10" cy="10.8" r="3" fill="#343741"/><path d="M8.7 10.8l0.9 0.9 1.7-1.8" stroke="#fff" stroke-width="0.9"/></svg>
<svg class="a" style="left:374px;top:759.8000000000001px;" width="12" height="13" viewBox="0 0 12 13" fill="none"><rect x="0.5" y="0.5" width="11" height="12" rx="1" stroke="#b6bdc8" stroke-width="1"/><path d="M3 3.5h6M3 6h4M5 8.5h4" stroke="#b6bdc8" stroke-width="0.9"/></svg>
<div class="a t" style="left:407px;top:762.65px;font-size:11.7px;height:11.7px;line-height:11.7px;color:#474c56;font-weight:normal;font-family:'Liberation Mono',monospace;">Jul 17, 2024 @ 09:40:39.584</div>
<div class="a" style="left:613px;top:757.1px;width:155.5px;height:18.5px;background:#fff;border:1px solid #d3dae6;border-radius:3px;"></div>
<svg class="a" style="left:622.7px;top:758.5000000000001px;" width="14" height="14" viewBox="0 0 14 14" fill="none"><path d="M7 0.9L12.5 4.1V9.9L7 13.1 1.5 9.9V4.1z" stroke="#bcc4d0" stroke-width="1.2" fill="#fff"/><path d="M4 10L5.2 8.8" stroke="#f5b648" stroke-width="1.8"/><path d="M5.2 8.8L8.8 5.2" stroke="#5b7fd9" stroke-width="1.8" stroke-dasharray="1.4 0.6"/><path d="M8.8 5.2L10.2 3.8" stroke="#f5b648" stroke-width="1.8"/></svg>
<div class="a t" style="left:641.5px;top:760.43px;font-size:11.75px;height:11.75px;line-height:11.75px;color:#1a1c21;font-weight:bold;font-family:'Liberation Sans',sans-serif;">accountingservice</div>
<svg class="a" style="left:749.0px;top:761.3000000000001px;" width="10" height="10" viewBox="0 0 10 10" fill="none"><path d="M1 3.2 L5 7 L9 3.2" stroke="#343741" stroke-width="1.2" stroke-linecap="round" stroke-linejoin="round"/></svg>
<div class="a" style="left:773.3px;top:757.10px;width:144.2px;height:18.5px;overflow:hidden"><div style="position:absolute;left:0;top:0;width:200px;height:18.5px;border:1px solid #d3dae6;border-radius:3px;background:#fff"></div><div class="t" style="position:absolute;left:8.5px;top:3px;font-size:12.15px;line-height:12.5px;font-weight:bold;color:#1a1c21">gke-miguel-otel-demo-default-pool</div></div>
<div class="a" style="left:909px;top:757.10px;width:9px;height:18.5px;background:linear-gradient(90deg,rgba(255,255,255,0),#f5f7fa 85%)"></div>
<div class="a t" style="left:935px;top:762.65px;font-size:11.7px;height:11.7px;line-height:11.7px;color:#474c56;font-weight:normal;font-family:'Liberation Mono',monospace;">waiting for kafka</div>
<div class="a" style="left:297px;top:781.90px;width:1076px;height:31.2px;background:#fff;border-bottom:1px solid #e3e8f0"></div>
<div class="a" style="left:302px;top:790.0px;width:15px;height:15px;background:#fff;border:1px solid #c9cfd8;border-radius:3px;"></div>
<svg class="a" style="left:326px;top:791.5px;" width="12" height="12" viewBox="0 0 12 12" fill="none"><path d="M1.5 10.5L10.5 1.5M7.5 1.5h3v3M1.5 7.5v3h3" stroke="#6f7580" stroke-width="1"/></svg>
<svg class="a" style="left:349px;top:790.5px;" width="14" height="14" viewBox="0 0 14 14" fill="none"><path d="M3 2.5v9.5h3" stroke="#343741" stroke-width="1" opacity="0.7"/><path d="M4.5 1h4.5l2.5 2.5v4M4.5 1v10.5h2" stroke="#343741" stroke-width="1.1"/><circle cx="10" cy="10.8" r="3" fill="#343741"/><path d="M8.7 10.8l0.9 0.9 1.7-1.8" stroke="#fff" stroke-width="0.9"/></svg>
<svg class="a" style="left:374px;top:791.0px;" width="12" height="13" viewBox="0 0 12 13" fill="none"><rect x="0.5" y="0.5" width="11" height="12" rx="1" stroke="#b6bdc8" stroke-width="1"/><path d="M3 3.5h6M3 6h4M5 8.5h4" stroke="#b6bdc8" stroke-width="0.9"/></svg>
<div class="a t" style="left:407px;top:793.85px;font-size:11.7px;height:11.7px;line-height:11.7px;color:#474c56;font-weight:normal;font-family:'Liberation Mono',monospace;">Jul 17, 2024 @ 09:40:37.479</div>
<div class="a" style="left:613px;top:788.3px;width:144.5px;height:18.5px;background:#fff;border:1px solid #d3dae6;border-radius:3px;"></div>
<svg class="a" style="left:622.7px;top:789.7px;" width="14" height="14" viewBox="0 0 14 14" fill="none"><path d="M7 0.9L12.5 4.1V9.9L7 13.1 1.5 9.9V4.1z" stroke="#bcc4d0" stroke-width="1.2" fill="#fff"/><path d="M4 10L5.2 8.8" stroke="#f5b648" stroke-width="1.8"/><path d="M5.2 8.8L8.8 5.2" stroke="#5b7fd9" stroke-width="1.8" stroke-dasharray="1.4 0.6"/><path d="M8.8 5.2L10.2 3.8" stroke="#f5b648" stroke-width="1.8"/></svg>
<div class="a t" style="left:641.5px;top:791.62px;font-size:11.75px;height:11.75px;line-height:11.75px;color:#1a1c21;font-weight:bold;font-family:'Liberation Sans',sans-serif;">checkoutservice</div>
<svg class="a" style="left:738.3px;top:792.5px;" width="10" height="10" viewBox="0 0 10 10" fill="none"><path d="M1 3.2 L5 7 L9 3.2" stroke="#343741" stroke-width="1.2" stroke-linecap="round" stroke-linejoin="round"/></svg>
<div class="a" style="left:762px;top:788.30px;width:155.5px;height:18.5px;overflow:hidden"><div style="position:absolute;left:0;top:0;width:200px;height:18.5px;border:1px solid #d3dae6;border-radius:3px;background:#fff"></div><div class="t" style="position:absolute;left:8.5px;top:3px;font-size:12.15px;line-height:12.5px;font-weight:bold;color:#1a1c21">gke-miguel-otel-demo-default-pool</div></div>
<div class="a" style="left:909px;top:788.30px;width:9px;height:18.5px;background:linear-gradient(90deg,rgba(255,255,255,0),#fff 85%)"></div>
<div class="a t" style="left:935px;top:793.85px;font-size:11.7px;height:11.7px;line-height:11.7px;color:#474c56;font-weight:normal;font-family:'Liberation Mono',monospace;">waiting for kafka</div>
<div class="a" style="left:297px;top:813.10px;width:1076px;height:31.2px;background:#f5f7fa;border-bottom:1px solid #e3e8f0"></div>
<div class="a" style="left:302px;top:821.1999999999999px;width:15px;height:15px;background:#fff;border:1px solid #c9cfd8;border-radius:3px;"></div>
<svg class="a" style="left:326px;top:822.6999999999999px;" width="12" height="12" viewBox="0 0 12 12" fill="none"><path d="M1.5 10.5L10.5 1.5M7.5 1.5h3v3M1.5 7.5v3h3" stroke="#6f7580" stroke-width="1"/></svg>
<svg class="a" style="left:349px;top:821.6999999999999px;" width="14" height="14" viewBox="0 0 14 14" fill="none"><path d="M3 2.5v9.5h3" stroke="#343741" stroke-width="1" opacity="0.7"/><path d="M4.5 1h4.5l2.5 2.5v4M4.5 1v10.5h2" stroke="#343741" stroke-width="1.1"/><circle cx="10" cy="10.8" r="3" fill="#343741"/><path d="M8.7 10.8l0.9 0.9 1.7-1.8" stroke="#fff" stroke-width="0.9"/></svg>
<svg class="a" style="left:374px;top:822.1999999999999px;" width="12" height="13" viewBox="0 0 12 13" fill="none"><rect x="0.5" y="0.5" width="11" height="12" rx="1" stroke="#b6bdc8" stroke-width="1"/><path d="M3 3.5h6M3 6h4M5 8.5h4" stroke="#b6bdc8" stroke-width="0.9"/></svg>
<div class="a t" style="left:407px;top:825.05px;font-size:11.7px;height:11.7px;line-height:11.7px;color:#474c56;font-weight:normal;font-family:'Liberation Mono',monospace;">Jul 17, 2024 @ 09:40:36.576</div>
<div class="a" style="left:613px;top:819.4999999999999px;width:155.5px;height:18.5px;background:#fff;border:1px solid #d3dae6;border-radius:3px;"></div>
<svg class="a" style="left:622.7px;top:820.9px;" width="14" height="14" viewBox="0 0 14 14" fill="none"><path d="M7 0.9L12.5 4.1V9.9L7 13.1 1.5 9.9V4.1z" stroke="#bcc4d0" stroke-width="1.2" fill="#fff"/><path d="M4 10L5.2 8.8" stroke="#f5b648" stroke-width="1.8"/><path d="M5.2 8.8L8.8 5.2" stroke="#5b7fd9" stroke-width="1.8" stroke-dasharray="1.4 0.6"/><path d="M8.8 5.2L10.2 3.8" stroke="#f5b648" stroke-width="1.8"/></svg>
<div class="a t" style="left:641.5px;top:822.82px;font-size:11.75px;height:11.75px;line-height:11.75px;color:#1a1c21;font-weight:bold;font-family:'Liberation Sans',sans-serif;">accountingservice</div>
<svg class="a" style="left:749.0px;top:823.6999999999999px;" width="10" height="10" viewBox="0 0 10 10" fill="none"><path d="M1 3.2 L5 7 L9 3.2" stroke="#343741" stroke-width="1.2" stroke-linecap="round" stroke-linejoin="round"/></svg>
<div class="a" style="left:773.3px;top:819.50px;width:144.2px;height:18.5px;overflow:hidden"><div style="position:absolute;left:0;top:0;width:200px;height:18.5px;border:1px solid #d3dae6;border-radius:3px;background:#fff"></div><div class="t" style="position:absolute;left:8.5px;top:3px;font-size:12.15px;line-height:12.5px;font-weight:bold;color:#1a1c21">gke-miguel-otel-demo-default-pool</div></div>
<div class="a" style="left:909px;top:819.50px;width:9px;height:18.5px;background:linear-gradient(90deg,rgba(255,255,255,0),#f5f7fa 85%)"></div>
<div class="a t" style="left:935px;top:825.05px;font-size:11.7px;height:11.7px;line-height:11.7px;color:#474c56;font-weight:normal;font-family:'Liberation Mono',monospace;">waiting for kafka</div>
<div class="a" style="left:297px;top:844.30px;width:1076px;height:31.2px;background:#fff;border-bottom:1px solid #e3e8f0"></div>
<div class="a" style="left:302px;top:852.4px;width:15px;height:15px;background:#fff;border:1px solid #c9cfd8;border-radius:3px;"></div>
<svg class="a" style="left:326px;top:853.9px;" width="12" height="12" viewBox="0 0 12 12" fill="none"><path d="M1.5 10.5L10.5 1.5M7.5 1.5h3v3M1.5 7.5v3h3" stroke="#6f7580" stroke-width="1"/></svg>
<svg class="a" style="left:349px;top:852.9px;" width="14" height="14" viewBox="0 0 14 14" fill="none"><path d="M3 2.5v9.5h3" stroke="#343741" stroke-width="1" opacity="0.7"/><path d="M4.5 1h4.5l2.5 2.5v4M4.5 1v10.5h2" stroke="#343741" stroke-width="1.1"/><circle cx="10" cy="10.8" r="3" fill="#343741"/><path d="M8.7 10.8l0.9 0.9 1.7-1.8" stroke="#fff" stroke-width="0.9"/></svg>
<svg class="a" style="left:374px;top:853.4px;" width="12" height="13" viewBox="0 0 12 13" fill="none"><rect x="0.5" y="0.5" width="11" height="12" rx="1" stroke="#b6bdc8" stroke-width="1"/><path d="M3 3.5h6M3 6h4M5 8.5h4" stroke="#b6bdc8" stroke-width="0.9"/></svg>
<div class="a t" style="left:407px;top:856.25px;font-size:11.7px;height:11.7px;line-height:11.7px;color:#474c56;font-weight:normal;font-family:'Liberation Mono',monospace;">Jul 17, 2024 @ 09:40:36.267</div>
<div class="a" style="left:613px;top:850.6999999999999px;width:295.5px;height:18.5px;background:#fff;border:1px solid #d3dae6;border-radius:3px;"></div>
<div class="a t" style="left:622px;top:853.88px;font-size:12.05px;height:12.05px;line-height:12.05px;color:#1a1c21;font-weight:bold;font-family:'Liberation Sans',sans-serif;">gke-miguel-otel-demo-default-pool-caed2bc5-</div>
<svg class="a" style="left:889.0px;top:854.9px;" width="10" height="10" viewBox="0 0 10 10" fill="none"><path d="M1 3.2 L5 7 L9 3.2" stroke="#343741" stroke-width="1.2" stroke-linecap="round" stroke-linejoin="round"/></svg>
<div class="a" style="left:911px;top:850.70px;width:6.5px;height:18.5px;overflow:hidden"><div style="position:absolute;left:0;top:0;width:20px;height:18.5px;border:1px solid #d3dae6;border-radius:3px;background:#fff"></div></div>
<div class="a t" style="left:935px;top:856.25px;font-size:11.7px;height:11.7px;line-height:11.7px;color:#474c56;font-weight:normal;font-family:'Liberation Mono',monospace;">I0717 08:40:36.266900 1 client.go:210] "Connect to server" &hellip;</div>
<div class="a" style="left:297px;top:875.50px;width:1076px;height:31.2px;background:#f5f7fa;border-bottom:1px solid #e3e8f0"></div>
<div class="a" style="left:302px;top:883.6px;width:15px;height:15px;background:#fff;border:1px solid #c9cfd8;border-radius:3px;"></div>
<svg class="a" style="left:326px;top:885.1px;" width="12" height="12" viewBox="0 0 12 12" fill="none"><path d="M1.5 10.5L10.5 1.5M7.5 1.5h3v3M1.5 7.5v3h3" stroke="#6f7580" stroke-width="1"/></svg>
<svg class="a" style="left:349px;top:884.1px;" width="14" height="14" viewBox="0 0 14 14" fill="none"><path d="M3 2.5v9.5h3" stroke="#343741" stroke-width="1" opacity="0.7"/><path d="M4.5 1h4.5l2.5 2.5v4M4.5 1v10.5h2" stroke="#343741" stroke-width="1.1"/><circle cx="10" cy="10.8" r="3" fill="#343741"/><path d="M8.7 10.8l0.9 0.9 1.7-1.8" stroke="#fff" stroke-width="0.9"/></svg>
<svg class="a" style="left:374px;top:884.6px;" width="12" height="13" viewBox="0 0 12 13" fill="none"><rect x="0.5" y="0.5" width="11" height="12" rx="1" stroke="#b6bdc8" stroke-width="1"/><path d="M3 3.5h6M3 6h4M5 8.5h4" stroke="#b6bdc8" stroke-width="0.9"/></svg>
<div class="a t" style="left:407px;top:887.45px;font-size:11.7px;height:11.7px;line-height:11.7px;color:#474c56;font-weight:normal;font-family:'Liberation Mono',monospace;">Jul 17, 2024 @ 09:40:34.471</div>
<div class="a" style="left:613px;top:881.9px;width:144.5px;height:18.5px;background:#fff;border:1px solid #d3dae6;border-radius:3px;"></div>
<svg class="a" style="left:622.7px;top:883.3000000000001px;" width="14" height="14" viewBox="0 0 14 14" fill="none"><path d="M7 0.9L12.5 4.1V9.9L7 13.1 1.5 9.9V4.1z" stroke="#bcc4d0" stroke-width="1.2" fill="#fff"/><path d="M4 10L5.2 8.8" stroke="#f5b648" stroke-width="1.8"/><path d="M5.2 8.8L8.8 5.2" stroke="#5b7fd9" stroke-width="1.8" stroke-dasharray="1.4 0.6"/><path d="M8.8 5.2L10.2 3.8" stroke="#f5b648" stroke-width="1.8"/></svg>
<div class="a t" style="left:641.5px;top:885.23px;font-size:11.75px;height:11.75px;line-height:11.75px;color:#1a1c21;font-weight:bold;font-family:'Liberation Sans',sans-serif;">checkoutservice</div>
<svg class="a" style="left:738.3px;top:886.1px;" width="10" height="10" viewBox="0 0 10 10" fill="none"><path d="M1 3.2 L5 7 L9 3.2" stroke="#343741" stroke-width="1.2" stroke-linecap="round" stroke-linejoin="round"/></svg>
<div class="a" style="left:762px;top:881.90px;width:155.5px;height:18.5px;overflow:hidden"><div style="position:absolute;left:0;top:0;width:200px;height:18.5px;border:1px solid #d3dae6;border-radius:3px;background:#fff"></div><div class="t" style="position:absolute;left:8.5px;top:3px;font-size:12.15px;line-height:12.5px;font-weight:bold;color:#1a1c21">gke-miguel-otel-demo-default-pool</div></div>
<div class="a" style="left:909px;top:881.90px;width:9px;height:18.5px;background:linear-gradient(90deg,rgba(255,255,255,0),#f5f7fa 85%)"></div>
<div class="a t" style="left:935px;top:887.45px;font-size:11.7px;height:11.7px;line-height:11.7px;color:#474c56;font-weight:normal;font-family:'Liberation Mono',monospace;">waiting for kafka</div>
<div class="a" style="left:297px;top:906.70px;width:1076px;height:31.2px;background:#fff;border-bottom:1px solid #e3e8f0"></div>
<div class="a" style="left:302px;top:914.8000000000001px;width:15px;height:15px;background:#fff;border:1px solid #c9cfd8;border-radius:3px;"></div>
<svg class="a" style="left:326px;top:916.3000000000001px;" width="12" height="12" viewBox="0 0 12 12" fill="none"><path d="M1.5 10.5L10.5 1.5M7.5 1.5h3v3M1.5 7.5v3h3" stroke="#6f7580" stroke-width="1"/></svg>
<svg class="a" style="left:349px;top:915.3000000000001px;" width="14" height="14" viewBox="0 0 14 14" fill="none"><path d="M3 2.5v9.5h3" stroke="#343741" stroke-width="1" opacity="0.7"/><path d="M4.5 1h4.5l2.5 2.5v4M4.5 1v10.5h2" stroke="#343741" stroke-width="1.1"/><circle cx="10" cy="10.8" r="3" fill="#343741"/><path d="M8.7 10.8l0.9 0.9 1.7-1.8" stroke="#fff" stroke-width="0.9"/></svg>
<svg class="a" style="left:374px;top:915.8000000000001px;" width="12" height="13" viewBox="0 0 12 13" fill="none"><rect x="0.5" y="0.5" width="11" height="12" rx="1" stroke="#b6bdc8" stroke-width="1"/><path d="M3 3.5h6M3 6h4M5 8.5h4" stroke="#b6bdc8" stroke-width="0.9"/></svg>
<div class="a t" style="left:407px;top:918.65px;font-size:11.7px;height:11.7px;line-height:11.7px;color:#474c56;font-weight:normal;font-family:'Liberation Mono',monospace;">Jul 17, 2024 @ 09:40:33.568</div>
<div class="a" style="left:613px;top:913.1px;width:155.5px;height:18.5px;background:#fff;border:1px solid #d3dae6;border-radius:3px;"></div>
<svg class="a" style="left:622.7px;top:914.5000000000001px;" width="14" height="14" viewBox="0 0 14 14" fill="none"><path d="M7 0.9L12.5 4.1V9.9L7 13.1 1.5 9.9V4.1z" stroke="#bcc4d0" stroke-width="1.2" fill="#fff"/><path d="M4 10L5.2 8.8" stroke="#f5b648" stroke-width="1.8"/><path d="M5.2 8.8L8.8 5.2" stroke="#5b7fd9" stroke-width="1.8" stroke-dasharray="1.4 0.6"/><path d="M8.8 5.2L10.2 3.8" stroke="#f5b648" stroke-width="1.8"/></svg>
<div class="a t" style="left:641.5px;top:916.43px;font-size:11.75px;height:11.75px;line-height:11.75px;color:#1a1c21;font-weight:bold;font-family:'Liberation Sans',sans-serif;">accountingservice</div>
<svg class="a" style="left:749.0px;top:917.3000000000001px;" width="10" height="10" viewBox="0 0 10 10" fill="none"><path d="M1 3.2 L5 7 L9 3.2" stroke="#343741" stroke-width="1.2" stroke-linecap="round" stroke-linejoin="round"/></svg>
<div class="a" style="left:773.3px;top:913.10px;width:144.2px;height:18.5px;overflow:hidden"><div style="position:absolute;left:0;top:0;width:200px;height:18.5px;border:1px solid #d3dae6;border-radius:3px;background:#fff"></div><div class="t" style="position:absolute;left:8.5px;top:3px;font-size:12.15px;line-height:12.5px;font-weight:bold;color:#1a1c21">gke-miguel-otel-demo-default-pool</div></div>
<div class="a" style="left:909px;top:913.10px;width:9px;height:18.5px;background:linear-gradient(90deg,rgba(255,255,255,0),#fff 85%)"></div>
<div class="a t" style="left:935px;top:918.65px;font-size:11.7px;height:11.7px;line-height:11.7px;color:#474c56;font-weight:normal;font-family:'Liberation Mono',monospace;">waiting for kafka</div>
<div class="a" style="left:297px;top:937.90px;width:1076px;height:31.2px;background:#f5f7fa;border-bottom:1px solid #e3e8f0"></div>
<div class="a" style="left:302px;top:946.0px;width:15px;height:15px;background:#fff;border:1px solid #c9cfd8;border-radius:3px;"></div>
<svg class="a" style="left:326px;top:947.5px;" width="12" height="12" viewBox="0 0 12 12" fill="none"><path d="M1.5 10.5L10.5 1.5M7.5 1.5h3v3M1.5 7.5v3h3" stroke="#6f7580" stroke-width="1"/></svg>
<svg class="a" style="left:349px;top:946.5px;" width="14" height="14" viewBox="0 0 14 14" fill="none"><path d="M3 2.5v9.5h3" stroke="#343741" stroke-width="1" opacity="0.7"/><path d="M4.5 1h4.5l2.5 2.5v4M4.5 1v10.5h2" stroke="#343741" stroke-width="1.1"/><circle cx="10" cy="10.8" r="3" fill="#343741"/><path d="M8.7 10.8l0.9 0.9 1.7-1.8" stroke="#fff" stroke-width="0.9"/></svg>
<svg class="a" style="left:374px;top:947.0px;" width="12" height="13" viewBox="0 0 12 13" fill="none"><rect x="0.5" y="0.5" width="11" height="12" rx="1" stroke="#b6bdc8" stroke-width="1"/><path d="M3 3.5h6M3 6h4M5 8.5h4" stroke="#b6bdc8" stroke-width="0.9"/></svg>
<div class="a t" style="left:407px;top:949.85px;font-size:11.7px;height:11.7px;line-height:11.7px;color:#474c56;font-weight:normal;font-family:'Liberation Mono',monospace;">Jul 17, 2024 @ 09:40:31.463</div>
<div class="a" style="left:613px;top:944.3px;width:144.5px;height:18.5px;background:#fff;border:1px solid #d3dae6;border-radius:3px;"></div>
<svg class="a" style="left:622.7px;top:945.7px;" width="14" height="14" viewBox="0 0 14 14" fill="none"><path d="M7 0.9L12.5 4.1V9.9L7 13.1 1.5 9.9V4.1z" stroke="#bcc4d0" stroke-width="1.2" fill="#fff"/><path d="M4 10L5.2 8.8" stroke="#f5b648" stroke-width="1.8"/><path d="M5.2 8.8L8.8 5.2" stroke="#5b7fd9" stroke-width="1.8" stroke-dasharray="1.4 0.6"/><path d="M8.8 5.2L10.2 3.8" stroke="#f5b648" stroke-width="1.8"/></svg>
<div class="a t" style="left:641.5px;top:947.62px;font-size:11.75px;height:11.75px;line-height:11.75px;color:#1a1c21;font-weight:bold;font-family:'Liberation Sans',sans-serif;">checkoutservice</div>
<svg class="a" style="left:738.3px;top:948.5px;" width="10" height="10" viewBox="0 0 10 10" fill="none"><path d="M1 3.2 L5 7 L9 3.2" stroke="#343741" stroke-width="1.2" stroke-linecap="round" stroke-linejoin="round"/></svg>
<div class="a" style="left:762px;top:944.30px;width:155.5px;height:18.5px;overflow:hidden"><div style="position:absolute;left:0;top:0;width:200px;height:18.5px;border:1px solid #d3dae6;border-radius:3px;background:#fff"></div><div class="t" style="position:absolute;left:8.5px;top:3px;font-size:12.15px;line-height:12.5px;font-weight:bold;color:#1a1c21">gke-miguel-otel-demo-default-pool</div></div>
<div class="a" style="left:909px;top:944.30px;width:9px;height:18.5px;background:linear-gradient(90deg,rgba(255,255,255,0),#f5f7fa 85%)"></div>
<div class="a t" style="left:935px;top:949.85px;font-size:11.7px;height:11.7px;line-height:11.7px;color:#474c56;font-weight:normal;font-family:'Liberation Mono',monospace;">waiting for kafka</div>
<div class="a" style="left:297px;top:969.10px;width:1076px;height:31.2px;background:#fff;border-bottom:1px solid #e3e8f0"></div>
<div class="a" style="left:302px;top:977.2px;width:15px;height:15px;background:#fff;border:1px solid #c9cfd8;border-radius:3px;"></div>
<svg class="a" style="left:326px;top:978.7px;" width="12" height="12" viewBox="0 0 12 12" fill="none"><path d="M1.5 10.5L10.5 1.5M7.5 1.5h3v3M1.5 7.5v3h3" stroke="#6f7580" stroke-width="1"/></svg>
<svg class="a" style="left:349px;top:977.7px;" width="14" height="14" viewBox="0 0 14 14" fill="none"><path d="M3 2.5v9.5h3" stroke="#343741" stroke-width="1" opacity="0.7"/><path d="M4.5 1h4.5l2.5 2.5v4M4.5 1v10.5h2" stroke="#343741" stroke-width="1.1"/><circle cx="10" cy="10.8" r="3" fill="#343741"/><path d="M8.7 10.8l0.9 0.9 1.7-1.8" stroke="#fff" stroke-width="0.9"/></svg>
<svg class="a" style="left:374px;top:978.2px;" width="12" height="13" viewBox="0 0 12 13" fill="none"><rect x="0.5" y="0.5" width="11" height="12" rx="1" stroke="#b6bdc8" stroke-width="1"/><path d="M3 3.5h6M3 6h4M5 8.5h4" stroke="#b6bdc8" stroke-width="0.9"/></svg>
<div class="a t" style="left:407px;top:981.05px;font-size:11.7px;height:11.7px;line-height:11.7px;color:#474c56;font-weight:normal;font-family:'Liberation Mono',monospace;">Jul 17, 2024 @ 09:40:30.560</div>
<div class="a" style="left:613px;top:975.5px;width:155.5px;height:18.5px;background:#fff;border:1px solid #d3dae6;border-radius:3px;"></div>
<svg class="a" style="left:622.7px;top:976.9000000000001px;" width="14" height="14" viewBox="0 0 14 14" fill="none"><path d="M7 0.9L12.5 4.1V9.9L7 13.1 1.5 9.9V4.1z" stroke="#bcc4d0" stroke-width="1.2" fill="#fff"/><path d="M4 10L5.2 8.8" stroke="#f5b648" stroke-width="1.8"/><path d="M5.2 8.8L8.8 5.2" stroke="#5b7fd9" stroke-width="1.8" stroke-dasharray="1.4 0.6"/><path d="M8.8 5.2L10.2 3.8" stroke="#f5b648" stroke-width="1.8"/></svg>
<div class="a t" style="left:641.5px;top:978.83px;font-size:11.75px;height:11.75px;line-height:11.75px;color:#1a1c21;font-weight:bold;font-family:'Liberation Sans',sans-serif;">accountingservice</div>
<svg class="a" style="left:749.0px;top:979.7px;" width="10" height="10" viewBox="0 0 10 10" fill="none"><path d="M1 3.2 L5 7 L9 3.2" stroke="#343741" stroke-width="1.2" stroke-linecap="round" stroke-linejoin="round"/></svg>
<div class="a" style="left:773.3px;top:975.50px;width:144.2px;height:18.5px;overflow:hidden"><div style="position:absolute;left:0;top:0;width:200px;height:18.5px;border:1px solid #d3dae6;border-radius:3px;background:#fff"></div><div class="t" style="position:absolute;left:8.5px;top:3px;font-size:12.15px;line-height:12.5px;font-weight:bold;color:#1a1c21">gke-miguel-otel-demo-default-pool</div></div>
<div class="a" style="left:909px;top:975.50px;width:9px;height:18.5px;background:linear-gradient(90deg,rgba(255,255,255,0),#fff 85%)"></div>
<div class="a t" style="left:935px;top:981.05px;font-size:11.7px;height:11.7px;line-height:11.7px;color:#474c56;font-weight:normal;font-family:'Liberation Mono',monospace;">waiting for kafka</div>
<div class="a" style="left:297px;top:1000.30px;width:1076px;height:31.2px;background:#f5f7fa;border-bottom:1px solid #e3e8f0"></div>
<div class="a" style="left:302px;top:1008.4px;width:15px;height:15px;background:#fff;border:1px solid #c9cfd8;border-radius:3px;"></div>
<svg class="a" style="left:326px;top:1009.9px;" width="12" height="12" viewBox="0 0 12 12" fill="none"><path d="M1.5 10.5L10.5 1.5M7.5 1.5h3v3M1.5 7.5v3h3" stroke="#6f7580" stroke-width="1"/></svg>
<svg class="a" style="left:349px;top:1008.9px;" width="14" height="14" viewBox="0 0 14 14" fill="none"><path d="M3 2.5v9.5h3" stroke="#343741" stroke-width="1" opacity="0.7"/><path d="M4.5 1h4.5l2.5 2.5v4M4.5 1v10.5h2" stroke="#343741" stroke-width="1.1"/><circle cx="10" cy="10.8" r="3" fill="#343741"/><path d="M8.7 10.8l0.9 0.9 1.7-1.8" stroke="#fff" stroke-width="0.9"/></svg>
<svg class="a" style="left:374px;top:1009.4px;" width="12" height="13" viewBox="0 0 12 13" fill="none"><rect x="0.5" y="0.5" width="11" height="12" rx="1" stroke="#b6bdc8" stroke-width="1"/><path d="M3 3.5h6M3 6h4M5 8.5h4" stroke="#b6bdc8" stroke-width="0.9"/></svg>
<div class="a t" style="left:407px;top:1012.25px;font-size:11.7px;height:11.7px;line-height:11.7px;color:#474c56;font-weight:normal;font-family:'Liberation Mono',monospace;">Jul 17, 2024 @ 09:40:28.455</div>
<div class="a" style="left:613px;top:1006.6999999999999px;width:144.5px;height:18.5px;background:#fff;border:1px solid #d3dae6;border-radius:3px;"></div>
<svg class="a" style="left:622.7px;top:1008.1px;" width="14" height="14" viewBox="0 0 14 14" fill="none"><path d="M7 0.9L12.5 4.1V9.9L7 13.1 1.5 9.9V4.1z" stroke="#bcc4d0" stroke-width="1.2" fill="#fff"/><path d="M4 10L5.2 8.8" stroke="#f5b648" stroke-width="1.8"/><path d="M5.2 8.8L8.8 5.2" stroke="#5b7fd9" stroke-width="1.8" stroke-dasharray="1.4 0.6"/><path d="M8.8 5.2L10.2 3.8" stroke="#f5b648" stroke-width="1.8"/></svg>
<div class="a t" style="left:641.5px;top:1010.02px;font-size:11.75px;height:11.75px;line-height:11.75px;color:#1a1c21;font-weight:bold;font-family:'Liberation Sans',sans-serif;">checkoutservice</div>
<svg class="a" style="left:738.3px;top:1010.9px;" width="10" height="10" viewBox="0 0 10 10" fill="none"><path d="M1 3.2 L5 7 L9 3.2" stroke="#343741" stroke-width="1.2" stroke-linecap="round" stroke-linejoin="round"/></svg>
<div class="a" style="left:762px;top:1006.70px;width:155.5px;height:18.5px;overflow:hidden"><div style="position:absolute;left:0;top:0;width:200px;height:18.5px;border:1px solid #d3dae6;border-radius:3px;background:#fff"></div><div class="t" style="position:absolute;left:8.5px;top:3px;font-size:12.15px;line-height:12.5px;font-weight:bold;color:#1a1c21">gke-miguel-otel-demo-default-pool</div></div>
<div class="a" style="left:909px;top:1006.70px;width:9px;height:18.5px;background:linear-gradient(90deg,rgba(255,255,255,0),#f5f7fa 85%)"></div>
<div class="a t" style="left:935px;top:1012.25px;font-size:11.7px;height:11.7px;line-height:11.7px;color:#474c56;font-weight:normal;font-family:'Liberation Mono',monospace;">waiting for kafka</div>
<div class="a" style="left:297px;top:1031.50px;width:1076px;height:31.2px;background:#fff;border-bottom:1px solid #e3e8f0"></div>
<div class="a" style="left:302px;top:1039.6px;width:15px;height:15px;background:#fff;border:1px solid #c9cfd8;border-radius:3px;"></div>
<svg class="a" style="left:326px;top:1041.1px;" width="12" height="12" viewBox="0 0 12 12" fill="none"><path d="M1.5 10.5L10.5 1.5M7.5 1.5h3v3M1.5 7.5v3h3" stroke="#6f7580" stroke-width="1"/></svg>
<svg class="a" style="left:349px;top:1040.1px;" width="14" height="14" viewBox="0 0 14 14" fill="none"><path d="M3 2.5v9.5h3" stroke="#343741" stroke-width="1" opacity="0.7"/><path d="M4.5 1h4.5l2.5 2.5v4M4.5 1v10.5h2" stroke="#343741" stroke-width="1.1"/><circle cx="10" cy="10.8" r="3" fill="#343741"/><path d="M8.7 10.8l0.9 0.9 1.7-1.8" stroke="#fff" stroke-width="0.9"/></svg>
<svg class="a" style="left:374px;top:1040.6px;" width="12" height="13" viewBox="0 0 12 13" fill="none"><rect x="0.5" y="0.5" width="11" height="12" rx="1" stroke="#b6bdc8" stroke-width="1"/><path d="M3 3.5h6M3 6h4M5 8.5h4" stroke="#b6bdc8" stroke-width="0.9"/></svg>
<div class="a t" style="left:407px;top:1043.45px;font-size:11.7px;height:11.7px;line-height:11.7px;color:#474c56;font-weight:normal;font-family:'Liberation Mono',monospace;">Jul 17, 2024 @ 09:40:27.552</div>
<div class="a" style="left:613px;top:1037.8999999999999px;width:155.5px;height:18.5px;background:#fff;border:1px solid #d3dae6;border-radius:3px;"></div>
<svg class="a" style="left:622.7px;top:1039.3px;" width="14" height="14" viewBox="0 0 14 14" fill="none"><path d="M7 0.9L12.5 4.1V9.9L7 13.1 1.5 9.9V4.1z" stroke="#bcc4d0" stroke-width="1.2" fill="#fff"/><path d="M4 10L5.2 8.8" stroke="#f5b648" stroke-width="1.8"/><path d="M5.2 8.8L8.8 5.2" stroke="#5b7fd9" stroke-width="1.8" stroke-dasharray="1.4 0.6"/><path d="M8.8 5.2L10.2 3.8" stroke="#f5b648" stroke-width="1.8"/></svg>
<div class="a t" style="left:641.5px;top:1041.22px;font-size:11.75px;height:11.75px;line-height:11.75px;color:#1a1c21;font-weight:bold;font-family:'Liberation Sans',sans-serif;">accountingservice</div>
<svg class="a" style="left:749.0px;top:1042.1px;" width="10" height="10" viewBox="0 0 10 10" fill="none"><path d="M1 3.2 L5 7 L9 3.2" stroke="#343741" stroke-width="1.2" stroke-linecap="round" stroke-linejoin="round"/></svg>
<div class="a" style="left:773.3px;top:1037.90px;width:144.2px;height:18.5px;overflow:hidden"><div style="position:absolute;left:0;top:0;width:200px;height:18.5px;border:1px solid #d3dae6;border-radius:3px;background:#fff"></div><div class="t" style="position:absolute;left:8.5px;top:3px;font-size:12.15px;line-height:12.5px;font-weight:bold;color:#1a1c21">gke-miguel-otel-demo-default-pool</div></div>
<div class="a" style="left:909px;top:1037.90px;width:9px;height:18.5px;background:linear-gradient(90deg,rgba(255,255,255,0),#fff 85%)"></div>
<div class="a t" style="left:935px;top:1043.45px;font-size:11.7px;height:11.7px;line-height:11.7px;color:#474c56;font-weight:normal;font-family:'Liberation Mono',monospace;">waiting for kafka</div>
<div class="a" style="left:297px;top:1062.70px;width:1076px;height:31.2px;background:#f5f7fa;border-bottom:1px solid #e3e8f0"></div>
<div class="a" style="left:302px;top:1070.7999999999997px;width:15px;height:15px;background:#fff;border:1px solid #c9cfd8;border-radius:3px;"></div>
<svg class="a" style="left:326px;top:1072.2999999999997px;" width="12" height="12" viewBox="0 0 12 12" fill="none"><path d="M1.5 10.5L10.5 1.5M7.5 1.5h3v3M1.5 7.5v3h3" stroke="#6f7580" stroke-width="1"/></svg>
<svg class="a" style="left:349px;top:1071.2999999999997px;" width="14" height="14" viewBox="0 0 14 14" fill="none"><path d="M3 2.5v9.5h3" stroke="#343741" stroke-width="1" opacity="0.7"/><path d="M4.5 1h4.5l2.5 2.5v4M4.5 1v10.5h2" stroke="#343741" stroke-width="1.1"/><circle cx="10" cy="10.8" r="3" fill="#343741"/><path d="M8.7 10.8l0.9 0.9 1.7-1.8" stroke="#fff" stroke-width="0.9"/></svg>
<svg class="a" style="left:374px;top:1071.7999999999997px;" width="12" height="13" viewBox="0 0 12 13" fill="none"><rect x="0.5" y="0.5" width="11" height="12" rx="1" stroke="#b6bdc8" stroke-width="1"/><path d="M3 3.5h6M3 6h4M5 8.5h4" stroke="#b6bdc8" stroke-width="0.9"/></svg>
<div class="a t" style="left:407px;top:1074.65px;font-size:11.7px;height:11.7px;line-height:11.7px;color:#474c56;font-weight:normal;font-family:'Liberation Mono',monospace;">Jul 17, 2024 @ 09:40:25.447</div>
<div class="a" style="left:613px;top:1069.0999999999997px;width:144.5px;height:18.5px;background:#fff;border:1px solid #d3dae6;border-radius:3px;"></div>
<svg class="a" style="left:622.7px;top:1070.4999999999998px;" width="14" height="14" viewBox="0 0 14 14" fill="none"><path d="M7 0.9L12.5 4.1V9.9L7 13.1 1.5 9.9V4.1z" stroke="#bcc4d0" stroke-width="1.2" fill="#fff"/><path d="M4 10L5.2 8.8" stroke="#f5b648" stroke-width="1.8"/><path d="M5.2 8.8L8.8 5.2" stroke="#5b7fd9" stroke-width="1.8" stroke-dasharray="1.4 0.6"/><path d="M8.8 5.2L10.2 3.8" stroke="#f5b648" stroke-width="1.8"/></svg>
<div class="a t" style="left:641.5px;top:1072.42px;font-size:11.75px;height:11.75px;line-height:11.75px;color:#1a1c21;font-weight:bold;font-family:'Liberation Sans',sans-serif;">checkoutservice</div>
<svg class="a" style="left:738.3px;top:1073.2999999999997px;" width="10" height="10" viewBox="0 0 10 10" fill="none"><path d="M1 3.2 L5 7 L9 3.2" stroke="#343741" stroke-width="1.2" stroke-linecap="round" stroke-linejoin="round"/></svg>
<div class="a" style="left:762px;top:1069.10px;width:155.5px;height:18.5px;overflow:hidden"><div style="position:absolute;left:0;top:0;width:200px;height:18.5px;border:1px solid #d3dae6;border-radius:3px;background:#fff"></div><div class="t" style="position:absolute;left:8.5px;top:3px;font-size:12.15px;line-height:12.5px;font-weight:bold;color:#1a1c21">gke-miguel-otel-demo-default-pool</div></div>
<div class="a" style="left:909px;top:1069.10px;width:9px;height:18.5px;background:linear-gradient(90deg,rgba(255,255,255,0),#f5f7fa 85%)"></div>
<div class="a t" style="left:935px;top:1074.65px;font-size:11.7px;height:11.7px;line-height:11.7px;color:#474c56;font-weight:normal;font-family:'Liberation Mono',monospace;">waiting for kafka</div>
<div class="a" style="left:297px;top:1093.90px;width:1076px;height:31.2px;background:#fff;border-bottom:1px solid #e3e8f0"></div>
<div class="a" style="left:302px;top:1102.0px;width:15px;height:15px;background:#fff;border:1px solid #c9cfd8;border-radius:3px;"></div>
<svg class="a" style="left:326px;top:1103.5px;" width="12" height="12" viewBox="0 0 12 12" fill="none"><path d="M1.5 10.5L10.5 1.5M7.5 1.5h3v3M1.5 7.5v3h3" stroke="#6f7580" stroke-width="1"/></svg>
<svg class="a" style="left:349px;top:1102.5px;" width="14" height="14" viewBox="0 0 14 14" fill="none"><path d="M3 2.5v9.5h3" stroke="#343741" stroke-width="1" opacity="0.7"/><path d="M4.5 1h4.5l2.5 2.5v4M4.5 1v10.5h2" stroke="#343741" stroke-width="1.1"/><circle cx="10" cy="10.8" r="3" fill="#343741"/><path d="M8.7 10.8l0.9 0.9 1.7-1.8" stroke="#fff" stroke-width="0.9"/></svg>
<svg class="a" style="left:374px;top:1103.0px;" width="12" height="13" viewBox="0 0 12 13" fill="none"><rect x="0.5" y="0.5" width="11" height="12" rx="1" stroke="#b6bdc8" stroke-width="1"/><path d="M3 3.5h6M3 6h4M5 8.5h4" stroke="#b6bdc8" stroke-width="0.9"/></svg>
<div class="a t" style="left:407px;top:1105.85px;font-size:11.7px;height:11.7px;line-height:11.7px;color:#474c56;font-weight:normal;font-family:'Liberation Mono',monospace;">Jul 17, 2024 @ 09:40:25.011</div>
<div class="a" style="left:613px;top:1100.3px;width:295.5px;height:18.5px;background:#fff;border:1px solid #d3dae6;border-radius:3px;"></div>
<div class="a t" style="left:622px;top:1103.47px;font-size:12.05px;height:12.05px;line-height:12.05px;color:#1a1c21;font-weight:bold;font-family:'Liberation Sans',sans-serif;">gke-miguel-otel-demo-default-pool-caed2bc5-</div>
<svg class="a" style="left:889.0px;top:1104.5px;" width="10" height="10" viewBox="0 0 10 10" fill="none"><path d="M1 3.2 L5 7 L9 3.2" stroke="#343741" stroke-width="1.2" stroke-linecap="round" stroke-linejoin="round"/></svg>
<div class="a" style="left:911px;top:1100.30px;width:6.5px;height:18.5px;overflow:hidden"><div style="position:absolute;left:0;top:0;width:20px;height:18.5px;border:1px solid #d3dae6;border-radius:3px;background:#fff"></div></div>
<div class="a t" style="left:935px;top:1105.85px;font-size:11.7px;height:11.7px;line-height:11.7px;color:#474c56;font-weight:normal;font-family:'Liberation Mono',monospace;">I0717 08:40:25.011423 1 client.go:210] "Connect to server" &hellip;</div>
<div class="a" style="left:297px;top:1125.10px;width:1076px;height:31.2px;background:#f5f7fa;border-bottom:1px solid #e3e8f0"></div>
<div class="a" style="left:302px;top:1133.1999999999998px;width:15px;height:15px;background:#fff;border:1px solid #c9cfd8;border-radius:3px;"></div>
<svg class="a" style="left:326px;top:1134.6999999999998px;" width="12" height="12" viewBox="0 0 12 12" fill="none"><path d="M1.5 10.5L10.5 1.5M7.5 1.5h3v3M1.5 7.5v3h3" stroke="#6f7580" stroke-width="1"/></svg>
<svg class="a" style="left:349px;top:1133.6999999999998px;" width="14" height="14" viewBox="0 0 14 14" fill="none"><path d="M3 2.5v9.5h3" stroke="#343741" stroke-width="1" opacity="0.7"/><path d="M4.5 1h4.5l2.5 2.5v4M4.5 1v10.5h2" stroke="#343741" stroke-width="1.1"/><circle cx="10" cy="10.8" r="3" fill="#343741"/><path d="M8.7 10.8l0.9 0.9 1.7-1.8" stroke="#fff" stroke-width="0.9"/></svg>
<svg class="a" style="left:374px;top:1134.1999999999998px;" width="12" height="13" viewBox="0 0 12 13" fill="none"><rect x="0.5" y="0.5" width="11" height="12" rx="1" stroke="#b6bdc8" stroke-width="1"/><path d="M3 3.5h6M3 6h4M5 8.5h4" stroke="#b6bdc8" stroke-width="0.9"/></svg>
<div class="a t" style="left:407px;top:1137.05px;font-size:11.7px;height:11.7px;line-height:11.7px;color:#474c56;font-weight:normal;font-family:'Liberation Mono',monospace;">Jul 17, 2024 @ 09:40:24.544</div>
<div class="a" style="left:613px;top:1131.4999999999998px;width:155.5px;height:18.5px;background:#fff;border:1px solid #d3dae6;border-radius:3px;"></div>
<svg class="a" style="left:622.7px;top:1132.8999999999999px;" width="14" height="14" viewBox="0 0 14 14" fill="none"><path d="M7 0.9L12.5 4.1V9.9L7 13.1 1.5 9.9V4.1z" stroke="#bcc4d0" stroke-width="1.2" fill="#fff"/><path d="M4 10L5.2 8.8" stroke="#f5b648" stroke-width="1.8"/><path d="M5.2 8.8L8.8 5.2" stroke="#5b7fd9" stroke-width="1.8" stroke-dasharray="1.4 0.6"/><path d="M8.8 5.2L10.2 3.8" stroke="#f5b648" stroke-width="1.8"/></svg>
<div class="a t" style="left:641.5px;top:1134.82px;font-size:11.75px;height:11.75px;line-height:11.75px;color:#1a1c21;font-weight:bold;font-family:'Liberation Sans',sans-serif;">accountingservice</div>
<svg class="a" style="left:749.0px;top:1135.6999999999998px;" width="10" height="10" viewBox="0 0 10 10" fill="none"><path d="M1 3.2 L5 7 L9 3.2" stroke="#343741" stroke-width="1.2" stroke-linecap="round" stroke-linejoin="round"/></svg>
<div class="a" style="left:773.3px;top:1131.50px;width:144.2px;height:18.5px;overflow:hidden"><div style="position:absolute;left:0;top:0;width:200px;height:18.5px;border:1px solid #d3dae6;border-radius:3px;background:#fff"></div><div class="t" style="position:absolute;left:8.5px;top:3px;font-size:12.15px;line-height:12.5px;font-weight:bold;color:#1a1c21">gke-miguel-otel-demo-default-pool</div></div>
<div class="a" style="left:909px;top:1131.50px;width:9px;height:18.5px;background:linear-gradient(90deg,rgba(255,255,255,0),#f5f7fa 85%)"></div>
<div class="a t" style="left:935px;top:1137.05px;font-size:11.7px;height:11.7px;line-height:11.7px;color:#474c56;font-weight:normal;font-family:'Liberation Mono',monospace;">waiting for kafka</div>
<div class="a" style="left:297px;top:1156.30px;width:1076px;height:31.2px;background:#fff;border-bottom:1px solid #e3e8f0"></div>
<div class="a" style="left:302px;top:1164.3999999999999px;width:15px;height:15px;background:#fff;border:1px solid #c9cfd8;border-radius:3px;"></div>
<svg class="a" style="left:326px;top:1165.8999999999999px;" width="12" height="12" viewBox="0 0 12 12" fill="none"><path d="M1.5 10.5L10.5 1.5M7.5 1.5h3v3M1.5 7.5v3h3" stroke="#6f7580" stroke-width="1"/></svg>
<svg class="a" style="left:349px;top:1164.8999999999999px;" width="14" height="14" viewBox="0 0 14 14" fill="none"><path d="M3 2.5v9.5h3" stroke="#343741" stroke-width="1" opacity="0.7"/><path d="M4.5 1h4.5l2.5 2.5v4M4.5 1v10.5h2" stroke="#343741" stroke-width="1.1"/><circle cx="10" cy="10.8" r="3" fill="#343741"/><path d="M8.7 10.8l0.9 0.9 1.7-1.8" stroke="#fff" stroke-width="0.9"/></svg>
<svg class="a" style="left:374px;top:1165.3999999999999px;" width="12" height="13" viewBox="0 0 12 13" fill="none"><rect x="0.5" y="0.5" width="11" height="12" rx="1" stroke="#b6bdc8" stroke-width="1"/><path d="M3 3.5h6M3 6h4M5 8.5h4" stroke="#b6bdc8" stroke-width="0.9"/></svg>
<div class="a t" style="left:407px;top:1168.25px;font-size:11.7px;height:11.7px;line-height:11.7px;color:#474c56;font-weight:normal;font-family:'Liberation Mono',monospace;">Jul 17, 2024 @ 09:40:22.439</div>
<div class="a" style="left:613px;top:1162.6999999999998px;width:144.5px;height:18.5px;background:#fff;border:1px solid #d3dae6;border-radius:3px;"></div>
<svg class="a" style="left:622.7px;top:1164.1px;" width="14" height="14" viewBox="0 0 14 14" fill="none"><path d="M7 0.9L12.5 4.1V9.9L7 13.1 1.5 9.9V4.1z" stroke="#bcc4d0" stroke-width="1.2" fill="#fff"/><path d="M4 10L5.2 8.8" stroke="#f5b648" stroke-width="1.8"/><path d="M5.2 8.8L8.8 5.2" stroke="#5b7fd9" stroke-width="1.8" stroke-dasharray="1.4 0.6"/><path d="M8.8 5.2L10.2 3.8" stroke="#f5b648" stroke-width="1.8"/></svg>
<div class="a t" style="left:641.5px;top:1166.02px;font-size:11.75px;height:11.75px;line-height:11.75px;color:#1a1c21;font-weight:bold;font-family:'Liberation Sans',sans-serif;">checkoutservice</div>
<svg class="a" style="left:738.3px;top:1166.8999999999999px;" width="10" height="10" viewBox="0 0 10 10" fill="none"><path d="M1 3.2 L5 7 L9 3.2" stroke="#343741" stroke-width="1.2" stroke-linecap="round" stroke-linejoin="round"/></svg>
<div class="a" style="left:762px;top:1162.70px;width:155.5px;height:18.5px;overflow:hidden"><div style="position:absolute;left:0;top:0;width:200px;height:18.5px;border:1px solid #d3dae6;border-radius:3px;background:#fff"></div><div class="t" style="position:absolute;left:8.5px;top:3px;font-size:12.15px;line-height:12.5px;font-weight:bold;color:#1a1c21">gke-miguel-otel-demo-default-pool</div></div>
<div class="a" style="left:909px;top:1162.70px;width:9px;height:18.5px;background:linear-gradient(90deg,rgba(255,255,255,0),#fff 85%)"></div>
<div class="a t" style="left:935px;top:1168.25px;font-size:11.7px;height:11.7px;line-height:11.7px;color:#474c56;font-weight:normal;font-family:'Liberation Mono',monospace;">waiting for kafka</div>
<div class="a" style="left:297px;top:1187.50px;width:1076px;height:31.2px;background:#f5f7fa;border-bottom:1px solid #e3e8f0"></div>
<div class="a" style="left:302px;top:1195.6px;width:15px;height:15px;background:#fff;border:1px solid #c9cfd8;border-radius:3px;"></div>
<svg class="a" style="left:326px;top:1197.1px;" width="12" height="12" viewBox="0 0 12 12" fill="none"><path d="M1.5 10.5L10.5 1.5M7.5 1.5h3v3M1.5 7.5v3h3" stroke="#6f7580" stroke-width="1"/></svg>
<svg class="a" style="left:349px;top:1196.1px;" width="14" height="14" viewBox="0 0 14 14" fill="none"><path d="M3 2.5v9.5h3" stroke="#343741" stroke-width="1" opacity="0.7"/><path d="M4.5 1h4.5l2.5 2.5v4M4.5 1v10.5h2" stroke="#343741" stroke-width="1.1"/><circle cx="10" cy="10.8" r="3" fill="#343741"/><path d="M8.7 10.8l0.9 0.9 1.7-1.8" stroke="#fff" stroke-width="0.9"/></svg>
<svg class="a" style="left:374px;top:1196.6px;" width="12" height="13" viewBox="0 0 12 13" fill="none"><rect x="0.5" y="0.5" width="11" height="12" rx="1" stroke="#b6bdc8" stroke-width="1"/><path d="M3 3.5h6M3 6h4M5 8.5h4" stroke="#b6bdc8" stroke-width="0.9"/></svg>
<div class="a t" style="left:407px;top:1199.45px;font-size:11.7px;height:11.7px;line-height:11.7px;color:#474c56;font-weight:normal;font-family:'Liberation Mono',monospace;">Jul 17, 2024 @ 09:40:21.536</div>
<div class="a" style="left:613px;top:1193.8999999999999px;width:155.5px;height:18.5px;background:#fff;border:1px solid #d3dae6;border-radius:3px;"></div>
<svg class="a" style="left:622.7px;top:1195.3px;" width="14" height="14" viewBox="0 0 14 14" fill="none"><path d="M7 0.9L12.5 4.1V9.9L7 13.1 1.5 9.9V4.1z" stroke="#bcc4d0" stroke-width="1.2" fill="#fff"/><path d="M4 10L5.2 8.8" stroke="#f5b648" stroke-width="1.8"/><path d="M5.2 8.8L8.8 5.2" stroke="#5b7fd9" stroke-width="1.8" stroke-dasharray="1.4 0.6"/><path d="M8.8 5.2L10.2 3.8" stroke="#f5b648" stroke-width="1.8"/></svg>
<div class="a t" style="left:641.5px;top:1197.22px;font-size:11.75px;height:11.75px;line-height:11.75px;color:#1a1c21;font-weight:bold;font-family:'Liberation Sans',sans-serif;">accountingservice</div>
<svg class="a" style="left:749.0px;top:1198.1px;" width="10" height="10" viewBox="0 0 10 10" fill="none"><path d="M1 3.2 L5 7 L9 3.2" stroke="#343741" stroke-width="1.2" stroke-linecap="round" stroke-linejoin="round"/></svg>
<div class="a" style="left:773.3px;top:1193.90px;width:144.2px;height:18.5px;overflow:hidden"><div style="position:absolute;left:0;top:0;width:200px;height:18.5px;border:1px solid #d3dae6;border-radius:3px;background:#fff"></div><div class="t" style="position:absolute;left:8.5px;top:3px;font-size:12.15px;line-height:12.5px;font-weight:bold;color:#1a1c21">gke-miguel-otel-demo-default-pool</div></div>
<div class="a" style="left:909px;top:1193.90px;width:9px;height:18.5px;background:linear-gradient(90deg,rgba(255,255,255,0),#f5f7fa 85%)"></div>
<div class="a t" style="left:935px;top:1199.45px;font-size:11.7px;height:11.7px;line-height:11.7px;color:#474c56;font-weight:normal;font-family:'Liberation Mono',monospace;">waiting for kafka</div>
<div class="a t" style="left:306px;top:1231.90px;font-size:12.2px;height:12.2px;line-height:12.2px;color:#343741;font-weight:normal;font-family:'Liberation Sans',sans-serif;">Rows per page: 100</div>
<svg class="a" style="left:423.5px;top:1233.5px;" width="10" height="10" viewBox="0 0 10 10" fill="none"><path d="M1 3.2 L5 7 L9 3.2" stroke="#343741" stroke-width="1.2" stroke-linecap="round" stroke-linejoin="round"/></svg>
<svg class="a" style="left:1213px;top:1232px;" width="10" height="12" viewBox="0 0 10 12" fill="none"><path d="M7 1L2 6l5 5" stroke="#a2abba" stroke-width="1.2"/></svg>
<div class="a t" style="left:1236.2px;top:1232.00px;font-size:13px;height:13px;line-height:13px;color:#006bb8;font-weight:bold;font-family:'Liberation Sans',sans-serif;text-decoration:underline">1</div>
<div class="a t" style="left:1259.1px;top:1232.00px;font-size:13px;height:13px;line-height:13px;color:#343741;font-weight:normal;font-family:'Liberation Sans',sans-serif;">2</div>
<div class="a t" style="left:1283.7px;top:1232.00px;font-size:13px;height:13px;line-height:13px;color:#343741;font-weight:normal;font-family:'Liberation Sans',sans-serif;">3</div>
<div class="a t" style="left:1308.2px;top:1232.00px;font-size:13px;height:13px;line-height:13px;color:#343741;font-weight:normal;font-family:'Liberation Sans',sans-serif;">4</div>
<div class="a t" style="left:1332.2px;top:1232.00px;font-size:13px;height:13px;line-height:13px;color:#343741;font-weight:normal;font-family:'Liberation Sans',sans-serif;">5</div>
<svg class="a" style="left:1355px;top:1232px;" width="10" height="12" viewBox="0 0 10 12" fill="none"><path d="M3 1l5 5-5 5" stroke="#343741" stroke-width="1.2"/></svg>
<div class="a" style="left:1372.5px;top:3px;width:626.5px;height:1247px;background:#fff;border-radius:0px;border-left:1.5px solid #d5dae3"></div>
<div class="a t" style="left:1389.5px;top:21.60px;font-size:15.8px;height:15.8px;line-height:15.8px;color:#1a1c21;font-weight:bold;font-family:'Liberation Sans',sans-serif;">Log details</div>
<svg class="a" style="left:1495px;top:23px;" width="14" height="13" viewBox="0 0 14 13" fill="none"><path d="M2 1v11M11 1L5.5 6.5 11 12" stroke="#343741" stroke-width="1.3"/></svg>
<svg class="a" style="left:1518px;top:23px;" width="12" height="13" viewBox="0 0 12 13" fill="none"><path d="M9 1L3.5 6.5 9 12" stroke="#343741" stroke-width="1.3"/></svg>
<div class="a t" style="left:1543px;top:22.60px;font-size:14.8px;height:14.8px;line-height:14.8px;color:#006bb8;font-weight:normal;font-family:'Liberation Sans',sans-serif;font-weight:bold">8</div>
<div class="a t" style="left:1560px;top:22.60px;font-size:14.8px;height:14.8px;line-height:14.8px;color:#69707d;font-weight:normal;font-family:'Liberation Sans',sans-serif;">of</div>
<div class="a t" style="left:1581px;top:22.80px;font-size:14.4px;height:14.4px;line-height:14.4px;color:#1a1c21;font-weight:bold;font-family:'Liberation Sans',sans-serif;">500</div>
<svg class="a" style="left:1621px;top:23px;" width="12" height="13" viewBox="0 0 12 13" fill="none"><path d="M3 1l5.5 5.5L3 12" stroke="#343741" stroke-width="1.3"/></svg>
<svg class="a" style="left:1642px;top:23px;" width="14" height="13" viewBox="0 0 14 13" fill="none"><path d="M3 1l5.5 5.5L3 12M12 1v11" stroke="#343741" stroke-width="1.3"/></svg>
<svg class="a" style="left:1980.5px;top:16.5px;" width="11" height="11" viewBox="0 0 11 11" fill="none"><path d="M1 1l9 9M10 1L1 10" stroke="#343741" stroke-width="1.2"/></svg>
<div class="a" style="left:1375px;top:57px;width:624px;height:1px;background:#e9edf3;border-radius:0px;"></div>
<div class="a t" style="left:1393.7px;top:82.50px;font-size:12px;height:12px;line-height:12px;color:#006bb8;font-weight:bold;font-family:'Liberation Sans',sans-serif;">Overview</div>
<div class="a t" style="left:1468px;top:82.50px;font-size:12px;height:12px;line-height:12px;color:#1a1c21;font-weight:bold;font-family:'Liberation Sans',sans-serif;">Table</div>
<div class="a t" style="left:1518.6px;top:82.75px;font-size:11.5px;height:11.5px;line-height:11.5px;color:#1a1c21;font-weight:bold;font-family:'Liberation Sans',sans-serif;">JSON</div>
<div class="a" style="left:1389px;top:103px;width:601px;height:1px;background:#d3dae6;border-radius:0px;"></div>
<div class="a" style="left:1389px;top:102px;width:62.5px;height:2px;background:#0077cc;border-radius:0px;"></div>
<svg class="a" style="left:1394.0px;top:125.0px;" width="13" height="13" viewBox="0 0 10 10" fill="none"><path d="M1 3.2 L5 7 L9 3.2" stroke="#343741" stroke-width="1.4" stroke-linecap="round" stroke-linejoin="round"/></svg>
<div class="a t" style="left:1417px;top:123.50px;font-size:16px;height:16px;line-height:16px;color:#1a1c21;font-weight:bold;font-family:'Liberation Sans',sans-serif;">Content breakdown</div>
<div class="a t" style="left:1404.6px;top:163.88px;font-size:12.25px;height:12.25px;line-height:12.25px;color:#69707d;font-weight:normal;font-family:'Liberation Sans',sans-serif;">message</div>
<div class="a" style="left:1797.5px;top:159px;width:177px;height:19.5px;background:#fff;border:1px solid #d3dae6;border-radius:3px;"></div>
<div class="a t" style="left:1805px;top:163.20px;font-size:12.2px;height:12.2px;line-height:12.2px;color:#1a1c21;font-weight:bold;font-family:'Liberation Sans',sans-serif;">Jul 17, 2024 @ 09:40:43.495</div>
<div class="a" style="left:1405px;top:185.5px;width:569.5px;height:82px;background:#f1f4fa;border-radius:0px;"></div>
<div class="a t" style="left:1420.3px;top:206.22px;font-size:13.57px;height:13.57px;line-height:13.57px;color:#343741;font-weight:normal;font-family:'Liberation Mono',monospace;">waiting for kafka</div>
<svg class="a" style="left:1939px;top:205px;" width="16" height="16" viewBox="0 0 16 16" fill="none"><rect x="1" y="1" width="14" height="14" rx="1.5" stroke="#343741" stroke-width="1.1"/><path d="M4 7V4h3M9 4h3v3M12 9v3H9M7 12H4V9" stroke="#343741" stroke-width="1.1"/></svg>
<svg class="a" style="left:1940px;top:232px;" width="15" height="17" viewBox="0 0 15 17" fill="none"><path d="M4.5 3H2.5a1 1 0 0 0-1 1v10.5a1 1 0 0 0 1 1h2" stroke="#343741" stroke-width="1.1"/><rect x="4.5" y="1" width="5" height="3" rx="0.8" stroke="#343741" stroke-width="1.1"/><rect x="5" y="6" width="9" height="10" rx="1" stroke="#343741" stroke-width="1.1"/><path d="M7 9h5M7 11h5M7 13h5" stroke="#343741" stroke-width="0.9"/></svg>
<div class="a" style="left:1389px;top:291px;width:601px;height:1px;background:#d3dae6;border-radius:0px;"></div>
<svg class="a" style="left:1394.0px;top:304.5px;" width="13" height="13" viewBox="0 0 10 10" fill="none"><path d="M1 3.2 L5 7 L9 3.2" stroke="#343741" stroke-width="1.4" stroke-linecap="round" stroke-linejoin="round"/></svg>
<div class="a t" style="left:1417px;top:303.00px;font-size:16px;height:16px;line-height:16px;color:#1a1c21;font-weight:bold;font-family:'Liberation Sans',sans-serif;">Service &amp; Infrastructure</div>
<div class="a t" style="left:1404.6px;top:340.60px;font-size:12.2px;height:12.2px;line-height:12.2px;color:#646a77;font-weight:bold;font-family:'Liberation Sans',sans-serif;">Service</div>
<svg class="a" style="left:1453.4px;top:340.9px;" width="12.6" height="12.6" viewBox="0 0 12.6 12.6" fill="none"><circle cx="6.3" cy="6.3" r="5.3" stroke="#69707d" stroke-width="1"/><path d="M4.5 4.9 a1.8 1.8 0 1 1 2.6 1.6 c-0.6 0.3 -0.8 0.6 -0.8 1.3" stroke="#69707d" stroke-width="1" stroke-linecap="round"/><circle cx="6.3" cy="9.3" r="0.6" fill="#69707d"/></svg>
<div class="a t" style="left:1404.6px;top:356.80px;font-size:15px;height:15px;line-height:15px;color:#343741;font-weight:normal;font-family:'Liberation Sans',sans-serif;">checkoutservice</div>
<div class="a t" style="left:1404.6px;top:392.20px;font-size:12.2px;height:12.2px;line-height:12.2px;color:#646a77;font-weight:bold;font-family:'Liberation Sans',sans-serif;">Host name</div>
<svg class="a" style="left:1471.7px;top:392.5px;" width="12.6" height="12.6" viewBox="0 0 12.6 12.6" fill="none"><circle cx="6.3" cy="6.3" r="5.3" stroke="#69707d" stroke-width="1"/><path d="M4.5 4.9 a1.8 1.8 0 1 1 2.6 1.6 c-0.6 0.3 -0.8 0.6 -0.8 1.3" stroke="#69707d" stroke-width="1" stroke-linecap="round"/><circle cx="6.3" cy="9.3" r="0.6" fill="#69707d"/></svg>
<div class="a t" style="left:1404.6px;top:408.70px;font-size:15px;height:15px;line-height:15px;color:#343741;font-weight:normal;font-family:'Liberation Sans',sans-serif;">gke-miguel-otel-demo-default-pool-caed2bc5-aai3</div>
<div class="a" style="left:1389px;top:450px;width:601px;height:1px;background:#d3dae6;border-radius:0px;"></div>
<svg class="a" style="left:1394.0px;top:463.9px;" width="13" height="13" viewBox="0 0 10 10" fill="none"><path d="M1 3.2 L5 7 L9 3.2" stroke="#343741" stroke-width="1.4" stroke-linecap="round" stroke-linejoin="round"/></svg>
<div class="a t" style="left:1417px;top:462.40px;font-size:16px;height:16px;line-height:16px;color:#1a1c21;font-weight:bold;font-family:'Liberation Sans',sans-serif;">Cloud</div>
<div class="a t" style="left:1404.6px;top:499.50px;font-size:12.2px;height:12.2px;line-height:12.2px;color:#646a77;font-weight:bold;font-family:'Liberation Sans',sans-serif;">Cloud provider</div>
<svg class="a" style="left:1493.7px;top:499.8px;" width="12.6" height="12.6" viewBox="0 0 12.6 12.6" fill="none"><circle cx="6.3" cy="6.3" r="5.3" stroke="#69707d" stroke-width="1"/><path d="M4.5 4.9 a1.8 1.8 0 1 1 2.6 1.6 c-0.6 0.3 -0.8 0.6 -0.8 1.3" stroke="#69707d" stroke-width="1" stroke-linecap="round"/><circle cx="6.3" cy="9.3" r="0.6" fill="#69707d"/></svg>
<svg class="a" style="left:1404.8px;top:516.6px;" width="15" height="14" viewBox="0 0 15 14" fill="none"><path d="M2.3 7.3 L4.9 2.8 H10.1 L11.3 4.8" stroke="#4285f4" stroke-width="2.9" stroke-linejoin="round"/><path d="M11.3 4.8 L12.7 7.3 L10.1 11.8 H8.2" stroke="#ea4335" stroke-width="2.9" stroke-linejoin="round"/><path d="M8.2 11.8 H4.9 L2.3 7.3" stroke="#fbbc05" stroke-width="2.9" stroke-linejoin="round"/><circle cx="7.5" cy="7.3" r="2.6" fill="#cfd0d2"/><circle cx="7.5" cy="7.3" r="1.1" fill="#f2f2f2"/></svg>
<div class="a t" style="left:1424.4px;top:516.20px;font-size:15px;height:15px;line-height:15px;color:#343741;font-weight:normal;font-family:'Liberation Sans',sans-serif;">gcp</div>
<div class="a t" style="left:1404.6px;top:550.90px;font-size:12.2px;height:12.2px;line-height:12.2px;color:#646a77;font-weight:bold;font-family:'Liberation Sans',sans-serif;">Cloud availability zone</div>
<svg class="a" style="left:1539.0px;top:551.2px;" width="12.6" height="12.6" viewBox="0 0 12.6 12.6" fill="none"><circle cx="6.3" cy="6.3" r="5.3" stroke="#69707d" stroke-width="1"/><path d="M4.5 4.9 a1.8 1.8 0 1 1 2.6 1.6 c-0.6 0.3 -0.8 0.6 -0.8 1.3" stroke="#69707d" stroke-width="1" stroke-linecap="round"/><circle cx="6.3" cy="9.3" r="0.6" fill="#69707d"/></svg>
<div class="a t" style="left:1404.6px;top:567.50px;font-size:15px;height:15px;line-height:15px;color:#343741;font-weight:normal;font-family:'Liberation Sans',sans-serif;">europe-central2-b</div>
<div class="a t" style="left:1404.6px;top:602.70px;font-size:12.2px;height:12.2px;line-height:12.2px;color:#646a77;font-weight:bold;font-family:'Liberation Sans',sans-serif;">Cloud instance ID</div>
<svg class="a" style="left:1511.2px;top:603.0px;" width="12.6" height="12.6" viewBox="0 0 12.6 12.6" fill="none"><circle cx="6.3" cy="6.3" r="5.3" stroke="#69707d" stroke-width="1"/><path d="M4.5 4.9 a1.8 1.8 0 1 1 2.6 1.6 c-0.6 0.3 -0.8 0.6 -0.8 1.3" stroke="#69707d" stroke-width="1" stroke-linecap="round"/><circle cx="6.3" cy="9.3" r="0.6" fill="#69707d"/></svg>
<div class="a t" style="left:1404.6px;top:618.50px;font-size:15px;height:15px;line-height:15px;color:#343741;font-weight:normal;font-family:'Liberation Sans',sans-serif;">4583780944686440132</div>
<div class="a" style="left:1389px;top:661px;width:601px;height:1px;background:#d3dae6;border-radius:0px;"></div>
<svg class="a" style="left:1394.0px;top:674.0px;" width="13" height="13" viewBox="0 0 10 10" fill="none"><path d="M1 3.2 L5 7 L9 3.2" stroke="#343741" stroke-width="1.4" stroke-linecap="round" stroke-linejoin="round"/></svg>
<div class="a t" style="left:1417px;top:672.50px;font-size:16px;height:16px;line-height:16px;color:#1a1c21;font-weight:bold;font-family:'Liberation Sans',sans-serif;">Other</div>
<div class="a t" style="left:1404.6px;top:709.90px;font-size:12.2px;height:12.2px;line-height:12.2px;color:#646a77;font-weight:bold;font-family:'Liberation Sans',sans-serif;">Log path file</div>
<svg class="a" style="left:1481.2px;top:710.2px;" width="12.6" height="12.6" viewBox="0 0 12.6 12.6" fill="none"><circle cx="6.3" cy="6.3" r="5.3" stroke="#69707d" stroke-width="1"/><path d="M4.5 4.9 a1.8 1.8 0 1 1 2.6 1.6 c-0.6 0.3 -0.8 0.6 -0.8 1.3" stroke="#69707d" stroke-width="1" stroke-linecap="round"/><circle cx="6.3" cy="9.3" r="0.6" fill="#69707d"/></svg>
<div class="a t" style="left:1404.6px;top:726.80px;font-size:15px;height:15px;line-height:15px;color:#343741;font-weight:normal;font-family:'Liberation Sans',sans-serif;">/var/log/pods/default_my-otel-demo-checkoutservice-f78d94664-8lflx_16353078-a3f...</div>
<div class="a t" style="left:1404.6px;top:761.30px;font-size:12.2px;height:12.2px;line-height:12.2px;color:#646a77;font-weight:bold;font-family:'Liberation Sans',sans-serif;">Dataset</div>
<svg class="a" style="left:1455.2px;top:761.6px;" width="12.6" height="12.6" viewBox="0 0 12.6 12.6" fill="none"><circle cx="6.3" cy="6.3" r="5.3" stroke="#69707d" stroke-width="1"/><path d="M4.5 4.9 a1.8 1.8 0 1 1 2.6 1.6 c-0.6 0.3 -0.8 0.6 -0.8 1.3" stroke="#69707d" stroke-width="1" stroke-linecap="round"/><circle cx="6.3" cy="9.3" r="0.6" fill="#69707d"/></svg>
<div class="a t" style="left:1404.6px;top:777.80px;font-size:15px;height:15px;line-height:15px;color:#343741;font-weight:normal;font-family:'Liberation Sans',sans-serif;">generic</div>
<div class="a t" style="left:1404.6px;top:813.20px;font-size:12.2px;height:12.2px;line-height:12.2px;color:#646a77;font-weight:bold;font-family:'Liberation Sans',sans-serif;">Namespace</div>
<svg class="a" style="left:1478.2px;top:813.5px;" width="12.6" height="12.6" viewBox="0 0 12.6 12.6" fill="none"><circle cx="6.3" cy="6.3" r="5.3" stroke="#69707d" stroke-width="1"/><path d="M4.5 4.9 a1.8 1.8 0 1 1 2.6 1.6 c-0.6 0.3 -0.8 0.6 -0.8 1.3" stroke="#69707d" stroke-width="1" stroke-linecap="round"/><circle cx="6.3" cy="9.3" r="0.6" fill="#69707d"/></svg>
<div class="a" style="left:1405.2px;top:827.8px;width:55.4px;height:18px;background:#fff;border:1px solid #d3dae6;border-radius:3px;"></div>
<div class="a t" style="left:1413.5px;top:830.60px;font-size:12px;height:12px;line-height:12px;color:#1a1c21;font-weight:bold;font-family:'Liberation Sans',sans-serif;">default</div>
<div class="a t" style="left:1404.6px;top:864.20px;font-size:12.2px;height:12.2px;line-height:12.2px;color:#646a77;font-weight:bold;font-family:'Liberation Sans',sans-serif;">Shipper</div>
<svg class="a" style="left:1455.2px;top:864.5px;" width="12.6" height="12.6" viewBox="0 0 12.6 12.6" fill="none"><circle cx="6.3" cy="6.3" r="5.3" stroke="#69707d" stroke-width="1"/><path d="M4.5 4.9 a1.8 1.8 0 1 1 2.6 1.6 c-0.6 0.3 -0.8 0.6 -0.8 1.3" stroke="#69707d" stroke-width="1" stroke-linecap="round"/><circle cx="6.3" cy="9.3" r="0.6" fill="#69707d"/></svg>
<div class="a t" style="left:1404.6px;top:880.70px;font-size:15px;height:15px;line-height:15px;color:#343741;font-weight:normal;font-family:'Liberation Sans',sans-serif;">otlp</div>
<div class="a" style="left:1389px;top:921px;width:601px;height:1px;background:#d3dae6;border-radius:0px;"></div>
<div class="a" style="left:1374px;top:1191.5px;width:625px;height:56.2px;background:#f1f3f8;border-radius:0px;"></div>
<svg class="a" style="left:1392px;top:1218px;" width="10" height="10" viewBox="0 0 10 10" fill="none"><path d="M0.5 0.5l9 9M9.5 0.5l-9 9" stroke="#006bb8" stroke-width="1.2"/></svg>
<div class="a t" style="left:1413px;top:1216.40px;font-size:13.2px;height:13.2px;line-height:13.2px;color:#006bb8;font-weight:bold;font-family:'Liberation Sans',sans-serif;">Close</div>
<div class="a" style="left:0px;top:1248.8px;width:1999px;height:1.2px;background:#000;border-radius:0px;"></div>
<div class="a" style="left:0px;top:1.8px;width:1999px;height:1.2px;background:#cdd2da;border-radius:0px;"></div>
<div class="a" style="left:0px;top:3px;width:1999px;height:6px;background:linear-gradient(rgba(180,186,196,0.45),rgba(200,205,212,0));border-radius:0px;"></div>
</body></html>
